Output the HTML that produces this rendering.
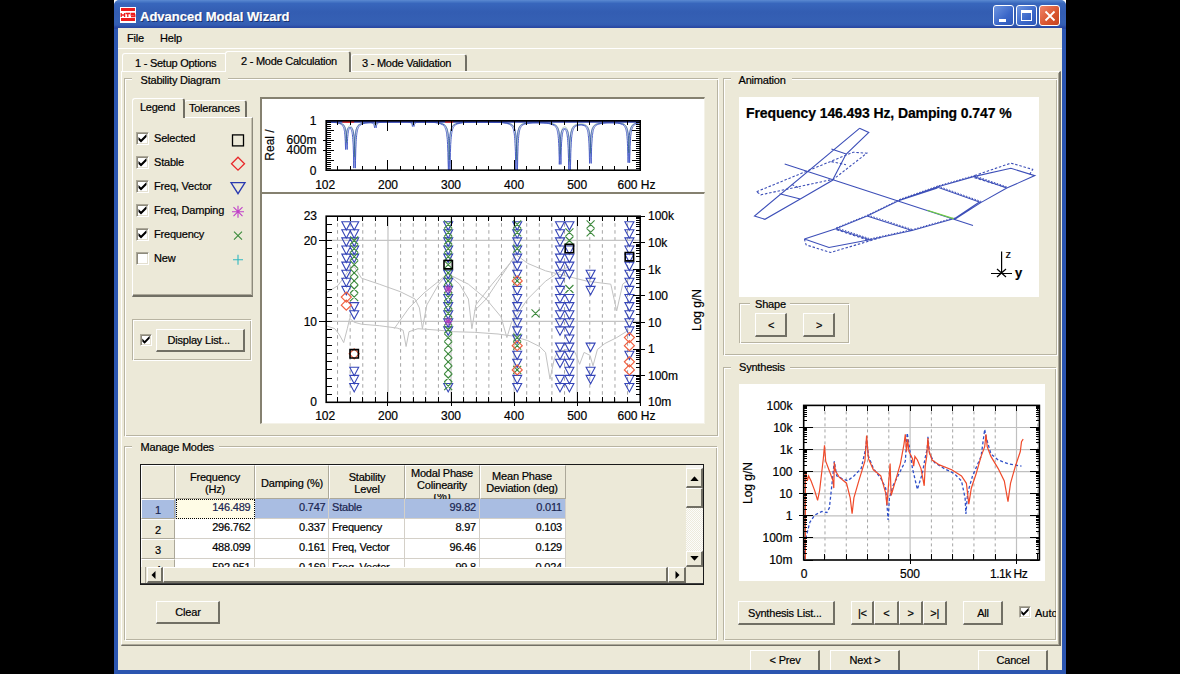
<!DOCTYPE html><html><head><meta charset="utf-8"><style>
html,body{margin:0;padding:0;}
body{width:1180px;height:674px;overflow:hidden;position:relative;background:#000;font-family:"Liberation Sans", sans-serif;}
.a{position:absolute;}
.t{position:absolute;white-space:pre;font-family:"Liberation Sans", sans-serif;-webkit-text-stroke:0.2px currentColor;}
svg.a{overflow:visible;}
</style></head><body>

<div class="a" style="left:114px;top:0px;width:5px;height:5px;background:#fff;"></div>
<div class="a" style="left:1061px;top:0px;width:5px;height:5px;background:#fff;"></div>
<div class="a" style="left:114px;top:0;width:952px;height:680px;background:#2b55b0;border-radius:7px 7px 0 0;"></div>
<div class="a" style="left:114px;top:0;width:952px;height:29px;border-radius:5px 5px 0 0;background:linear-gradient(#5c8ad2 0px,#4a7ac8 1.5px,#3866bc 3.5px,#335db2 12px,#3560b4 22px,#335cb2 25px,#2a4aa4 27px,#2846a0 29px);"></div>
<div class="a" style="left:118px;top:28px;width:944px;height:642px;background:#ECE9D8;"></div>
<svg class="a" style="left:0;top:0" width="1180" height="674"><rect x="120" y="7" width="16" height="16" fill="#fff"/><rect x="121" y="8" width="14" height="3" fill="#ee1c1c"/><rect x="121" y="18" width="14" height="3" fill="#ee1c1c"/><path d="M121.2 13 V17 M124.6 13 V17 M121.2 15 H124.6 M125.6 13.5 H130 M127.8 13.5 V17 M135 13.5 H131.2 V15 H134.8 V16.6 H131" stroke="#ee1c1c" stroke-width="1.3" fill="none"/></svg>
<div class="t" style="top:10.00px;font-size:13px;line-height:13px;font-weight:bold;color:#fff;left:140.00px;text-shadow:1px 1px 0 #1a2f6a;">Advanced Modal Wizard</div>
<div class="a" style="left:993px;top:5px;width:21px;height:21px;box-sizing:border-box;border:1px solid #fff;border-radius:3px;background:linear-gradient(135deg,#6f96e0,#3a66c8 60%,#2f58b8);"><div class="a" style="left:5px;top:13px;width:7px;height:3px;background:#fff"></div></div>
<div class="a" style="left:1016px;top:5px;width:21px;height:21px;box-sizing:border-box;border:1px solid #fff;border-radius:3px;background:linear-gradient(135deg,#6f96e0,#3a66c8 60%,#2f58b8);"><div class="a" style="left:4px;top:4px;width:11px;height:11px;box-sizing:border-box;border:1px solid #fff;border-top-width:3px;"></div></div>
<div class="a" style="left:1039px;top:5px;width:21px;height:21px;box-sizing:border-box;border:1px solid #fff;border-radius:3px;background:linear-gradient(135deg,#f0846a,#d8542e 60%,#c54420);"><svg class="a" style="left:4px;top:4px" width="12" height="12"><path d="M1.5 1.5 L10.5 10.5 M10.5 1.5 L1.5 10.5" stroke="#fff" stroke-width="1.8"/></svg></div>
<div class="t" style="top:32.69px;font-size:11px;line-height:11px;font-weight:normal;color:#000;letter-spacing:-0.2px;left:127.00px;">File</div>
<div class="t" style="top:32.69px;font-size:11px;line-height:11px;font-weight:normal;color:#000;letter-spacing:-0.2px;left:160.00px;">Help</div>
<div class="a" style="left:118px;top:48px;width:944px;height:1px;background:#fff;"></div>
<div class="a" style="left:121px;top:71px;width:940px;height:575px;border-style:solid;border-width:1px 2px 2px 1px;border-color:#fff #716F64 #716F64 #fff;box-sizing:border-box;"></div>
<div class="a" style="left:1058px;top:73px;width:1px;height:572px;background:#ACA899;"></div>
<div class="a" style="left:122px;top:644px;width:937px;height:1px;background:#ACA899;"></div>
<div class="a" style="left:122px;top:53px;width:105px;height:18px;box-sizing:border-box;border-style:solid;border-width:1px 1px 0 1px;border-color:#fff #fff #716F64 #fff;border-radius:3px 3px 0 0;background:#ECE9D8;"></div>
<div class="t" style="top:57.69px;font-size:11px;line-height:11px;font-weight:normal;color:#000;letter-spacing:-0.25px;left:135.00px;">1 - Setup Options</div>
<div class="a" style="left:351px;top:54px;width:116px;height:17px;box-sizing:border-box;border-style:solid;border-width:1px 2px 0 1px;border-color:#fff #716F64 #716F64 #fff;border-radius:3px 3px 0 0;background:#ECE9D8;"></div>
<div class="t" style="top:57.69px;font-size:11px;line-height:11px;font-weight:normal;color:#000;letter-spacing:-0.25px;left:362.00px;">3 - Mode Validation</div>
<div class="a" style="left:225px;top:51px;width:126px;height:21px;box-sizing:border-box;border-style:solid;border-width:1px 2px 0 1px;border-color:#fff #716F64 #716F64 #fff;border-radius:3px 3px 0 0;background:#ECE9D8;"></div>
<div class="t" style="top:55.99px;font-size:11px;line-height:11px;font-weight:normal;color:#000;letter-spacing:-0.25px;left:241.00px;">2 - Mode Calculation</div>
<div class="a" style="left:124px;top:78px;width:594px;height:358px;border:1px solid #B8B4A2;box-sizing:border-box;"></div>
<div class="a" style="left:125px;top:79px;width:594px;height:358px;border:1px solid #fff;box-sizing:border-box;"></div>
<div class="a" style="left:125px;top:79px;width:592px;height:356px;border:0;"></div>
<div class="a" style="left:132px;top:77px;width:96px;height:4px;background:#ECE9D8;"></div>
<div class="t" style="top:74.69px;font-size:11px;line-height:11px;font-weight:normal;color:#000;letter-spacing:-0.2px;left:140.50px;">Stability Diagram</div>
<div class="a" style="left:132px;top:117px;width:121px;height:180px;border-style:solid;border-width:1px 1px 2px 1px;border-color:#fff #8d8a7c #716F64 #fff;box-sizing:border-box;"></div>
<div class="a" style="left:251px;top:118px;width:1px;height:177px;background:#C4C0B0;"></div>
<div class="a" style="left:133px;top:294px;width:118px;height:1px;background:#ACA899;"></div>
<div class="a" style="left:184px;top:100px;width:63px;height:17px;box-sizing:border-box;border-style:solid;border-width:1px 2px 0 1px;border-color:#fff #716F64 #716F64 #fff;border-radius:3px 3px 0 0;background:#ECE9D8;"></div>
<div class="t" style="top:102.69px;font-size:11px;line-height:11px;font-weight:normal;color:#000;letter-spacing:-0.25px;left:189.00px;">Tolerances</div>
<div class="a" style="left:132px;top:98px;width:53px;height:20px;box-sizing:border-box;border-style:solid;border-width:1px 2px 0 1px;border-color:#fff #716F64 #716F64 #fff;border-radius:3px 3px 0 0;background:#ECE9D8;"></div>
<div class="t" style="top:101.69px;font-size:11px;line-height:11px;font-weight:normal;color:#000;letter-spacing:-0.25px;left:140.00px;">Legend</div>
<div class="a" style="left:136px;top:132px;width:13px;height:13px;background:#fff;border-style:solid;border-width:1px;border-color:#ACA899 #fff #fff #ACA899;box-sizing:border-box;box-shadow:inset 1px 1px 0 #8d8a7c, inset -1px -1px 0 #E4E0D0;"></div>
<svg class="a" style="left:136px;top:132px" width="13" height="13" viewBox="0 0 13 13"><path d="M2.5 5 L5 7.5 L10.5 2 L10.5 5 L5 10.5 L2.5 8 Z" fill="#000"/></svg>
<div class="t" style="top:133.49px;font-size:11px;line-height:11px;font-weight:normal;color:#000;letter-spacing:-0.2px;left:154.00px;">Selected</div>
<div class="a" style="left:136px;top:156px;width:13px;height:13px;background:#fff;border-style:solid;border-width:1px;border-color:#ACA899 #fff #fff #ACA899;box-sizing:border-box;box-shadow:inset 1px 1px 0 #8d8a7c, inset -1px -1px 0 #E4E0D0;"></div>
<svg class="a" style="left:136px;top:156px" width="13" height="13" viewBox="0 0 13 13"><path d="M2.5 5 L5 7.5 L10.5 2 L10.5 5 L5 10.5 L2.5 8 Z" fill="#000"/></svg>
<div class="t" style="top:157.49px;font-size:11px;line-height:11px;font-weight:normal;color:#000;letter-spacing:-0.2px;left:154.00px;">Stable</div>
<div class="a" style="left:136px;top:180px;width:13px;height:13px;background:#fff;border-style:solid;border-width:1px;border-color:#ACA899 #fff #fff #ACA899;box-sizing:border-box;box-shadow:inset 1px 1px 0 #8d8a7c, inset -1px -1px 0 #E4E0D0;"></div>
<svg class="a" style="left:136px;top:180px" width="13" height="13" viewBox="0 0 13 13"><path d="M2.5 5 L5 7.5 L10.5 2 L10.5 5 L5 10.5 L2.5 8 Z" fill="#000"/></svg>
<div class="t" style="top:181.49px;font-size:11px;line-height:11px;font-weight:normal;color:#000;letter-spacing:-0.2px;left:154.00px;">Freq, Vector</div>
<div class="a" style="left:136px;top:204px;width:13px;height:13px;background:#fff;border-style:solid;border-width:1px;border-color:#ACA899 #fff #fff #ACA899;box-sizing:border-box;box-shadow:inset 1px 1px 0 #8d8a7c, inset -1px -1px 0 #E4E0D0;"></div>
<svg class="a" style="left:136px;top:204px" width="13" height="13" viewBox="0 0 13 13"><path d="M2.5 5 L5 7.5 L10.5 2 L10.5 5 L5 10.5 L2.5 8 Z" fill="#000"/></svg>
<div class="t" style="top:205.49px;font-size:11px;line-height:11px;font-weight:normal;color:#000;letter-spacing:-0.2px;left:154.00px;">Freq, Damping</div>
<div class="a" style="left:136px;top:228px;width:13px;height:13px;background:#fff;border-style:solid;border-width:1px;border-color:#ACA899 #fff #fff #ACA899;box-sizing:border-box;box-shadow:inset 1px 1px 0 #8d8a7c, inset -1px -1px 0 #E4E0D0;"></div>
<svg class="a" style="left:136px;top:228px" width="13" height="13" viewBox="0 0 13 13"><path d="M2.5 5 L5 7.5 L10.5 2 L10.5 5 L5 10.5 L2.5 8 Z" fill="#000"/></svg>
<div class="t" style="top:229.49px;font-size:11px;line-height:11px;font-weight:normal;color:#000;letter-spacing:-0.2px;left:154.00px;">Frequency</div>
<div class="a" style="left:136px;top:252px;width:13px;height:13px;background:#fff;border-style:solid;border-width:1px;border-color:#ACA899 #fff #fff #ACA899;box-sizing:border-box;box-shadow:inset 1px 1px 0 #8d8a7c, inset -1px -1px 0 #E4E0D0;"></div>
<div class="t" style="top:253.49px;font-size:11px;line-height:11px;font-weight:normal;color:#000;letter-spacing:-0.2px;left:154.00px;">New</div>
<svg class="a" style="left:0;top:0" width="1180" height="674"><rect x="232.5" y="134.9" width="11" height="11" fill="none" stroke="#000" stroke-width="1.3"/><path d="M238 157.20000000000002 L244.5 163.70000000000002 L238 170.20000000000002 L231.5 163.70000000000002 Z" fill="none" stroke="#e8282a" stroke-width="1.3"/><path d="M231 182.70000000000002 L245 182.70000000000002 L238 193.70000000000002 Z" fill="none" stroke="#2a3ab0" stroke-width="1.3"/><path d="M232 211.70000000000002 L244 211.70000000000002 M238 205.70000000000002 L238 217.70000000000002 M233.5 207.20000000000002 L242.5 216.20000000000002 M242.5 207.20000000000002 L233.5 216.20000000000002" stroke="#c040c8" stroke-width="1.1"/><path d="M234 231.70000000000002 L242 239.70000000000002 M242 231.70000000000002 L234 239.70000000000002" stroke="#3a8a3a" stroke-width="1.1"/><path d="M233 259.7 L243 259.7 M238 254.7 L238 264.7" stroke="#30b8c0" stroke-width="1.1"/></svg>
<div class="a" style="left:132px;top:319px;width:119px;height:41px;border:1px solid #B8B4A2;box-sizing:border-box;"></div>
<div class="a" style="left:133px;top:320px;width:119px;height:41px;border:1px solid #fff;box-sizing:border-box;"></div>
<div class="a" style="left:140px;top:334px;width:12px;height:12px;background:#fff;border-style:solid;border-width:1px;border-color:#ACA899 #fff #fff #ACA899;box-sizing:border-box;box-shadow:inset 1px 1px 0 #8d8a7c, inset -1px -1px 0 #E4E0D0;"></div>
<svg class="a" style="left:140px;top:334px" width="12" height="12" viewBox="0 0 13 13"><path d="M2.5 5 L5 7.5 L10.5 2 L10.5 5 L5 10.5 L2.5 8 Z" fill="#000"/></svg>
<div class="a" style="left:156px;top:329px;width:89px;height:23px;background:#ECE9D8;border-style:solid;border-width:1px 2px 2px 1px;border-color:#fff #716F64 #716F64 #fff;box-sizing:border-box;"></div>
<div class="t" style="top:334.69px;font-size:11px;line-height:11px;font-weight:normal;color:#000;letter-spacing:-0.2px;left:167.50px;">Display List...</div>
<div class="a" style="left:260px;top:97px;width:445px;height:96px;background:#fff;border-style:solid;border-width:2px 1px 1px 2px;border-color:#858170 #F4F2E8 #F4F2E8 #858170;box-sizing:border-box;"></div>
<div class="a" style="left:260px;top:192px;width:445px;height:232px;background:#fff;border-style:solid;border-width:2px 1px 1px 2px;border-color:#858170 #F4F2E8 #F4F2E8 #858170;box-sizing:border-box;"></div>
<svg class="a" style="left:0;top:0" width="1180" height="674"><path d="M326.2,121.8 L328.7,122.0 L331.2,122.1 L333.8,122.4 L336.3,122.7 L338.8,123.3 L339.0,123.3 L339.1,123.4 L339.3,123.4 L339.4,123.5 L339.6,123.6 L339.8,123.6 L339.9,123.7 L340.1,123.8 L340.2,123.8 L340.4,123.9 L340.5,124.0 L340.7,124.1 L340.9,124.2 L341.0,124.3 L341.2,124.4 L341.3,124.5 L341.5,124.6 L341.6,124.7 L341.8,124.8 L342.0,125.0 L342.1,125.2 L342.3,125.3 L342.4,125.5 L342.6,125.7 L342.8,125.9 L342.9,126.2 L343.1,126.5 L343.2,126.8 L343.4,127.1 L343.5,127.5 L343.7,127.9 L343.9,128.4 L344.0,129.0 L344.2,129.7 L344.3,130.5 L344.5,131.5 L344.6,132.7 L344.8,134.1 L345.0,136.0 L345.1,138.3 L345.3,141.3 L345.4,145.1 L345.6,149.5 L345.7,147.0 L345.9,142.9 L346.1,139.6 L346.2,137.1 L346.4,135.2 L346.5,133.7 L346.7,132.5 L346.8,131.6 L347.0,130.8 L347.2,130.2 L347.3,129.6 L347.5,129.2 L347.6,128.8 L347.8,128.5 L348.0,128.3 L348.1,128.1 L348.3,127.9 L348.4,127.8 L348.6,127.7 L348.7,127.6 L348.9,127.6 L349.1,127.5 L349.2,127.5 L349.4,127.5 L349.5,127.6 L349.7,127.6 L349.8,127.7 L350.0,127.8 L350.2,128.0 L350.3,128.1 L350.5,128.3 L350.6,128.5 L350.8,128.8 L350.9,129.1 L351.1,129.4 L351.3,129.8 L351.4,130.2 L351.6,130.7 L351.7,131.3 L351.9,131.9 L352.1,132.7 L352.2,133.6 L352.4,134.7 L352.5,136.1 L352.7,137.6 L352.8,139.6 L353.0,142.0 L353.2,145.1 L353.3,149.0 L353.5,154.1 L353.6,160.7 L353.8,168.1 L353.9,163.6 L354.1,156.5 L354.3,150.8 L354.4,146.4 L354.6,142.9 L354.7,140.2 L354.9,138.0 L355.0,136.3 L355.2,134.8 L355.4,133.6 L355.5,132.5 L355.7,131.7 L355.8,130.9 L356.0,130.2 L356.1,129.6 L356.3,129.1 L356.5,128.6 L356.6,128.2 L356.8,127.8 L356.9,127.5 L357.1,127.2 L357.3,126.9 L357.4,126.7 L357.6,126.4 L357.7,126.2 L357.9,126.0 L358.0,125.8 L358.2,125.7 L358.4,125.5 L358.5,125.3 L358.7,125.2 L358.8,125.1 L359.0,125.0 L359.1,124.8 L359.3,124.7 L359.5,124.6 L359.6,124.5 L359.8,124.4 L359.9,124.4 L360.1,124.3 L360.2,124.2 L360.4,124.1 L360.6,124.1 L360.7,124.0 L360.9,123.9 L361.0,123.9 L361.2,123.8 L361.4,123.7 L361.5,123.7 L364.0,123.1 L366.6,122.8 L369.1,122.7 L369.2,122.7 L369.4,122.7 L369.5,122.7 L369.7,122.7 L369.9,122.7 L370.0,122.7 L370.2,122.7 L370.3,122.7 L370.5,122.7 L370.7,122.7 L370.8,122.7 L371.0,122.8 L371.1,122.8 L371.3,122.8 L371.4,122.8 L371.6,122.9 L371.8,122.9 L371.9,122.9 L372.1,123.0 L372.2,123.0 L372.4,123.1 L372.5,123.2 L372.7,123.2 L372.9,123.3 L373.0,123.5 L373.2,123.6 L373.3,123.8 L373.5,124.0 L373.6,124.2 L373.8,124.5 L374.0,124.9 L374.1,125.4 L374.3,126.0 L374.4,126.8 L374.6,127.8 L374.8,127.2 L374.9,126.3 L375.1,125.6 L375.2,125.0 L375.4,124.6 L375.5,124.2 L375.7,124.0 L375.9,123.7 L376.0,123.5 L376.2,123.4 L376.3,123.3 L376.5,123.1 L376.6,123.0 L376.8,122.9 L377.0,122.9 L377.1,122.8 L377.3,122.7 L377.4,122.7 L377.6,122.6 L377.7,122.6 L377.9,122.5 L378.1,122.5 L378.2,122.5 L378.4,122.4 L378.5,122.4 L378.7,122.4 L378.8,122.4 L379.0,122.3 L379.2,122.3 L379.3,122.3 L379.5,122.3 L379.6,122.2 L379.8,122.2 L380.0,122.2 L380.1,122.2 L380.3,122.2 L380.4,122.2 L380.6,122.2 L380.7,122.1 L380.9,122.1 L381.1,122.1 L381.2,122.1 L381.4,122.1 L381.5,122.1 L381.7,122.1 L381.8,122.1 L382.0,122.0 L382.2,122.0 L382.3,122.0 L384.8,121.9 L387.4,121.9 L389.9,121.8 L392.4,121.8 L394.9,121.8 L397.4,121.8 L400.0,121.8 L402.5,121.8 L405.0,121.9 L405.2,121.9 L405.3,121.9 L405.5,121.9 L405.6,121.9 L405.8,121.9 L406.0,121.9 L406.1,121.9 L406.3,121.9 L406.4,121.9 L406.6,122.0 L406.7,122.0 L406.9,122.0 L407.1,122.0 L407.2,122.0 L407.4,122.0 L407.5,122.0 L407.7,122.0 L407.9,122.1 L408.0,122.1 L408.2,122.1 L408.3,122.1 L408.5,122.1 L408.6,122.2 L408.8,122.2 L409.0,122.2 L409.1,122.2 L409.3,122.3 L409.4,122.3 L409.6,122.3 L409.7,122.4 L409.9,122.4 L410.1,122.5 L410.2,122.5 L410.4,122.6 L410.5,122.7 L410.7,122.8 L410.8,122.9 L411.0,123.0 L411.2,123.1 L411.3,123.3 L411.5,123.5 L411.6,123.8 L411.8,124.1 L412.0,124.5 L412.1,125.1 L412.3,125.7 L412.4,126.5 L412.6,126.1 L412.7,125.3 L412.9,124.7 L413.1,124.3 L413.2,123.9 L413.4,123.6 L413.5,123.4 L413.7,123.2 L413.8,123.1 L414.0,122.9 L414.2,122.8 L414.3,122.7 L414.5,122.7 L414.6,122.6 L414.8,122.5 L414.9,122.5 L415.1,122.4 L415.3,122.4 L415.4,122.4 L415.6,122.3 L415.7,122.3 L415.9,122.3 L416.0,122.3 L416.2,122.2 L416.4,122.2 L416.5,122.2 L416.7,122.2 L416.8,122.2 L417.0,122.1 L417.2,122.1 L417.3,122.1 L417.5,122.1 L417.6,122.1 L417.8,122.1 L417.9,122.1 L418.1,122.1 L418.3,122.1 L418.4,122.1 L418.6,122.1 L418.7,122.1 L418.9,122.0 L419.0,122.0 L419.2,122.0 L419.4,122.0 L419.5,122.0 L419.7,122.0 L419.8,122.0 L420.0,122.0 L420.1,122.0 L422.7,122.0 L425.2,122.1 L427.7,122.1 L430.2,122.2 L432.8,122.4 L435.3,122.6 L437.8,123.0 L440.3,123.7 L442.8,124.9 L443.0,125.1 L443.2,125.2 L443.3,125.3 L443.5,125.5 L443.6,125.6 L443.8,125.8 L443.9,126.0 L444.1,126.2 L444.3,126.4 L444.4,126.6 L444.6,126.9 L444.7,127.1 L444.9,127.4 L445.1,127.7 L445.2,128.1 L445.4,128.5 L445.5,128.9 L445.7,129.3 L445.8,129.9 L446.0,130.4 L446.2,131.1 L446.3,131.8 L446.5,132.7 L446.6,133.7 L446.8,134.8 L446.9,136.1 L447.1,137.7 L447.3,139.6 L447.4,141.8 L447.6,144.6 L447.7,148.1 L447.9,152.4 L448.0,157.9 L448.2,164.7 L448.4,170.2 L448.5,167.7 L448.7,160.4 L448.8,154.4 L449.0,149.7 L449.2,145.9 L449.3,142.9 L449.5,140.4 L449.6,138.4 L449.8,136.7 L449.9,135.3 L450.1,134.1 L450.3,133.1 L450.4,132.2 L450.6,131.4 L450.7,130.7 L450.9,130.1 L451.0,129.6 L451.2,129.1 L451.4,128.6 L451.5,128.2 L451.7,127.9 L451.8,127.6 L452.0,127.3 L452.1,127.0 L452.3,126.7 L452.5,126.5 L452.6,126.3 L452.8,126.1 L452.9,125.9 L453.1,125.7 L453.3,125.6 L453.4,125.4 L453.6,125.3 L453.7,125.1 L453.9,125.0 L454.0,124.9 L454.2,124.8 L454.4,124.7 L454.5,124.6 L454.7,124.5 L454.8,124.4 L455.0,124.3 L455.1,124.2 L455.3,124.2 L455.5,124.1 L455.6,124.0 L455.8,124.0 L455.9,123.9 L456.1,123.8 L458.6,123.1 L461.1,122.7 L463.7,122.5 L466.2,122.3 L468.7,122.2 L471.2,122.1 L473.7,122.1 L476.3,122.0 L478.8,122.0 L481.3,122.0 L483.8,122.0 L486.4,122.0 L488.9,122.1 L491.4,122.1 L493.9,122.2 L496.4,122.3 L499.0,122.4 L501.5,122.6 L504.0,122.9 L506.5,123.3 L509.1,124.1 L509.2,124.2 L509.4,124.3 L509.5,124.4 L509.7,124.4 L509.8,124.5 L510.0,124.6 L510.2,124.7 L510.3,124.8 L510.5,124.9 L510.6,125.1 L510.8,125.2 L510.9,125.3 L511.1,125.5 L511.3,125.6 L511.4,125.8 L511.6,126.0 L511.7,126.1 L511.9,126.4 L512.0,126.6 L512.2,126.8 L512.4,127.1 L512.5,127.4 L512.7,127.7 L512.8,128.0 L513.0,128.4 L513.1,128.9 L513.3,129.3 L513.5,129.9 L513.6,130.5 L513.8,131.2 L513.9,132.0 L514.1,132.9 L514.3,133.9 L514.4,135.2 L514.6,136.7 L514.7,138.5 L514.9,140.7 L515.0,143.4 L515.2,146.8 L515.4,151.2 L515.5,156.9 L515.7,164.1 L515.8,170.2 L516.0,167.4 L516.1,159.6 L516.3,153.3 L516.5,148.4 L516.6,144.7 L516.8,141.7 L516.9,139.3 L517.1,137.4 L517.2,135.8 L517.4,134.4 L517.6,133.3 L517.7,132.3 L517.9,131.5 L518.0,130.8 L518.2,130.1 L518.4,129.6 L518.5,129.1 L518.7,128.6 L518.8,128.2 L519.0,127.9 L519.1,127.6 L519.3,127.3 L519.5,127.0 L519.6,126.7 L519.8,126.5 L519.9,126.3 L520.1,126.1 L520.2,125.9 L520.4,125.8 L520.6,125.6 L520.7,125.5 L520.9,125.3 L521.0,125.2 L521.2,125.1 L521.3,125.0 L521.5,124.9 L521.7,124.8 L521.8,124.7 L522.0,124.6 L522.1,124.5 L522.3,124.4 L522.5,124.4 L522.6,124.3 L522.8,124.2 L522.9,124.2 L523.1,124.1 L523.2,124.0 L523.4,124.0 L523.6,123.9 L526.1,123.4 L528.6,123.0 L531.1,122.9 L533.6,122.8 L536.2,122.8 L538.7,122.8 L541.2,122.9 L543.7,123.0 L546.3,123.2 L548.8,123.6 L551.3,124.2 L553.8,125.3 L554.0,125.4 L554.1,125.5 L554.3,125.6 L554.4,125.7 L554.6,125.8 L554.8,126.0 L554.9,126.1 L555.1,126.3 L555.2,126.4 L555.4,126.6 L555.6,126.8 L555.7,127.0 L555.9,127.3 L556.0,127.5 L556.2,127.8 L556.3,128.1 L556.5,128.4 L556.7,128.8 L556.8,129.2 L557.0,129.7 L557.1,130.2 L557.3,130.7 L557.4,131.4 L557.6,132.2 L557.8,133.1 L557.9,134.1 L558.1,135.3 L558.2,136.8 L558.4,138.6 L558.5,140.8 L558.7,143.6 L558.9,147.2 L559.0,151.8 L559.2,157.7 L559.3,164.4 L559.5,160.5 L559.7,154.2 L559.8,149.1 L560.0,145.2 L560.1,142.2 L560.3,139.9 L560.4,138.0 L560.6,136.4 L560.8,135.2 L560.9,134.2 L561.1,133.3 L561.2,132.6 L561.4,132.0 L561.5,131.4 L561.7,131.0 L561.9,130.6 L562.0,130.3 L562.2,130.0 L562.3,129.7 L562.5,129.5 L562.6,129.3 L562.8,129.2 L563.0,129.1 L563.1,128.9 L563.3,128.9 L563.4,128.8 L563.6,128.8 L563.7,128.8 L563.9,128.8 L564.1,128.8 L564.2,128.8 L564.4,128.9 L564.5,128.9 L564.7,129.0 L564.9,129.2 L565.0,129.3 L565.2,129.5 L565.3,129.6 L565.5,129.9 L565.6,130.1 L565.8,130.4 L566.0,130.7 L566.1,131.1 L566.3,131.5 L566.4,132.0 L566.6,132.6 L566.7,133.2 L566.9,134.0 L567.1,134.8 L567.2,135.9 L567.4,137.1 L567.5,138.5 L567.7,140.3 L567.8,142.4 L568.0,145.1 L568.2,148.5 L568.3,152.9 L568.5,158.5 L568.6,165.7 L568.8,170.2 L569.0,169.0 L569.1,161.1 L569.3,154.8 L569.4,150.0 L569.6,146.2 L569.7,143.2 L569.9,140.8 L570.1,138.8 L570.2,137.2 L570.4,135.9 L570.5,134.7 L570.7,133.7 L570.8,132.9 L571.0,132.1 L571.2,131.5 L571.3,130.9 L571.5,130.4 L571.6,130.0 L571.8,129.5 L571.9,129.2 L572.1,128.8 L572.3,128.5 L572.4,128.3 L572.6,128.0 L572.7,127.8 L572.9,127.6 L573.0,127.4 L573.2,127.2 L573.4,127.0 L573.5,126.8 L573.7,126.7 L573.8,126.6 L574.0,126.4 L574.2,126.3 L574.3,126.2 L574.5,126.1 L574.6,126.0 L574.8,125.9 L574.9,125.8 L575.1,125.7 L575.3,125.7 L575.4,125.6 L575.6,125.5 L575.7,125.4 L575.9,125.4 L576.0,125.3 L576.2,125.3 L576.4,125.2 L576.5,125.2 L579.0,124.8 L581.6,124.8 L584.1,125.6 L584.2,125.7 L584.4,125.8 L584.6,125.9 L584.7,126.0 L584.9,126.1 L585.0,126.2 L585.2,126.3 L585.3,126.5 L585.5,126.6 L585.7,126.8 L585.8,127.0 L586.0,127.2 L586.1,127.4 L586.3,127.7 L586.4,127.9 L586.6,128.2 L586.8,128.6 L586.9,128.9 L587.1,129.3 L587.2,129.8 L587.4,130.3 L587.6,130.9 L587.7,131.6 L587.9,132.4 L588.0,133.3 L588.2,134.3 L588.3,135.6 L588.5,137.1 L588.7,138.9 L588.8,141.2 L589.0,143.9 L589.1,147.5 L589.3,151.9 L589.4,157.4 L589.6,163.4 L589.8,159.8 L589.9,153.9 L590.1,149.1 L590.2,145.2 L590.4,142.1 L590.5,139.7 L590.7,137.7 L590.9,136.0 L591.0,134.7 L591.2,133.5 L591.3,132.5 L591.5,131.7 L591.6,131.0 L591.8,130.3 L592.0,129.8 L592.1,129.3 L592.3,128.8 L592.4,128.4 L592.6,128.1 L592.8,127.7 L592.9,127.5 L593.1,127.2 L593.2,126.9 L593.4,126.7 L593.5,126.5 L593.7,126.3 L593.9,126.1 L594.0,126.0 L594.2,125.8 L594.3,125.7 L594.5,125.5 L594.6,125.4 L594.8,125.3 L595.0,125.2 L595.1,125.1 L595.3,125.0 L595.4,124.9 L595.6,124.8 L595.7,124.7 L595.9,124.6 L596.1,124.5 L596.2,124.5 L596.4,124.4 L596.5,124.3 L596.7,124.3 L596.9,124.2 L597.0,124.2 L597.2,124.1 L597.3,124.1 L599.8,123.5 L602.4,123.1 L604.9,122.9 L607.4,122.8 L609.9,122.8 L612.5,122.8 L615.0,122.9 L617.5,123.1 L620.0,123.6 L622.5,124.6 L622.7,124.6 L622.9,124.7 L623.0,124.9 L623.2,125.0 L623.3,125.1 L623.5,125.2 L623.6,125.4 L623.8,125.5 L624.0,125.7 L624.1,125.9 L624.3,126.1 L624.4,126.3 L624.6,126.5 L624.8,126.8 L624.9,127.0 L625.1,127.3 L625.2,127.7 L625.4,128.1 L625.5,128.5 L625.7,128.9 L625.9,129.5 L626.0,130.1 L626.2,130.7 L626.3,131.5 L626.5,132.4 L626.6,133.5 L626.8,134.8 L627.0,136.3 L627.1,138.1 L627.3,140.4 L627.4,143.2 L627.6,146.7 L627.7,151.1 L627.9,156.6 L628.1,162.7 L628.2,159.1 L628.4,153.2 L628.5,148.3 L628.7,144.4 L628.9,141.4 L629.0,138.9 L629.2,136.9 L629.3,135.3 L629.5,134.0 L629.6,132.8 L629.8,131.8 L630.0,131.0 L630.1,130.3 L630.3,129.6 L630.4,129.1 L630.6,128.6 L630.7,128.1 L630.9,127.7 L631.1,127.4 L631.2,127.1 L631.4,126.8 L631.5,126.5 L631.7,126.3 L631.8,126.0 L632.0,125.8 L632.2,125.6 L632.3,125.5 L632.5,125.3 L632.6,125.1 L632.8,125.0 L632.9,124.9 L633.1,124.7 L633.3,124.6 L633.4,124.5 L633.6,124.4 L633.7,124.3 L633.9,124.2 L634.1,124.1 L634.2,124.0 L634.4,124.0 L634.5,123.9 L634.7,123.8 L634.8,123.8 L635.0,123.7 L635.2,123.6 L635.3,123.6 L635.5,123.5 L635.6,123.5 L635.8,123.4 L638.3,122.8" fill="none" stroke="#4a5ec8" stroke-width="1"/><path d="M326.2,121.8 L328.7,121.9 L331.2,122.0 L333.8,122.2 L336.3,122.5 L338.8,122.9 L341.3,123.7 L341.5,123.7 L341.6,123.8 L341.8,123.9 L342.0,123.9 L342.1,124.0 L342.3,124.1 L342.4,124.2 L342.6,124.3 L342.8,124.4 L342.9,124.5 L343.1,124.6 L343.2,124.8 L343.4,124.9 L343.5,125.1 L343.7,125.2 L343.9,125.4 L344.0,125.6 L344.2,125.8 L344.3,126.0 L344.5,126.3 L344.6,126.6 L344.8,126.9 L345.0,127.3 L345.1,127.7 L345.3,128.1 L345.4,128.7 L345.6,129.3 L345.7,130.0 L345.9,130.9 L346.1,131.9 L346.2,133.2 L346.4,134.8 L346.5,136.8 L346.7,139.4 L346.8,142.7 L347.0,146.9 L347.2,149.5 L347.3,145.2 L347.5,141.5 L347.6,138.6 L347.8,136.3 L348.0,134.6 L348.1,133.2 L348.3,132.1 L348.4,131.2 L348.6,130.5 L348.7,129.9 L348.9,129.5 L349.1,129.0 L349.2,128.7 L349.4,128.4 L349.5,128.2 L349.7,128.0 L349.8,127.9 L350.0,127.7 L350.2,127.6 L350.3,127.6 L350.5,127.5 L350.6,127.5 L350.8,127.5 L350.9,127.6 L351.1,127.6 L351.3,127.7 L351.4,127.8 L351.6,127.9 L351.7,128.0 L351.9,128.2 L352.1,128.4 L352.2,128.6 L352.4,128.9 L352.5,129.2 L352.7,129.5 L352.8,129.9 L353.0,130.4 L353.2,130.9 L353.3,131.5 L353.5,132.2 L353.6,133.1 L353.8,134.1 L353.9,135.2 L354.1,136.6 L354.3,138.4 L354.4,140.5 L354.6,143.2 L354.7,146.5 L354.9,150.9 L355.0,156.6 L355.2,163.6 L355.4,168.1 L355.5,160.6 L355.7,154.0 L355.8,148.9 L356.0,144.9 L356.1,141.8 L356.3,139.3 L356.5,137.3 L356.6,135.7 L356.8,134.3 L356.9,133.2 L357.1,132.2 L357.3,131.3 L357.4,130.6 L357.6,130.0 L357.7,129.4 L357.9,128.9 L358.0,128.5 L358.2,128.1 L358.4,127.7 L358.5,127.4 L358.7,127.1 L358.8,126.8 L359.0,126.6 L359.1,126.3 L359.3,126.1 L359.5,125.9 L359.6,125.8 L359.8,125.6 L359.9,125.4 L360.1,125.3 L360.2,125.2 L360.4,125.0 L360.6,124.9 L360.7,124.8 L360.9,124.7 L361.0,124.6 L361.2,124.5 L361.4,124.4 L361.5,124.3 L361.7,124.2 L361.8,124.2 L362.0,124.1 L362.1,124.0 L362.3,124.0 L362.5,123.9 L362.6,123.8 L362.8,123.8 L362.9,123.7 L365.4,123.1 L368.0,122.8 L370.5,122.7 L370.7,122.7 L370.8,122.7 L371.0,122.7 L371.1,122.7 L371.3,122.7 L371.4,122.7 L371.6,122.7 L371.8,122.7 L371.9,122.7 L372.1,122.7 L372.2,122.7 L372.4,122.7 L372.5,122.8 L372.7,122.8 L372.9,122.8 L373.0,122.8 L373.2,122.9 L373.3,122.9 L373.5,123.0 L373.6,123.0 L373.8,123.1 L374.0,123.1 L374.1,123.2 L374.3,123.3 L374.4,123.4 L374.6,123.5 L374.8,123.7 L374.9,123.8 L375.1,124.0 L375.2,124.3 L375.4,124.6 L375.5,125.1 L375.7,125.6 L375.9,126.3 L376.0,127.2 L376.2,127.8 L376.3,126.8 L376.5,126.0 L376.6,125.3 L376.8,124.8 L377.0,124.4 L377.1,124.1 L377.3,123.9 L377.4,123.7 L377.6,123.5 L377.7,123.3 L377.9,123.2 L378.1,123.1 L378.2,123.0 L378.4,122.9 L378.5,122.8 L378.7,122.8 L378.8,122.7 L379.0,122.7 L379.2,122.6 L379.3,122.6 L379.5,122.5 L379.6,122.5 L379.8,122.5 L380.0,122.4 L380.1,122.4 L380.3,122.4 L380.4,122.3 L380.6,122.3 L380.7,122.3 L380.9,122.3 L381.1,122.3 L381.2,122.2 L381.4,122.2 L381.5,122.2 L381.7,122.2 L381.8,122.2 L382.0,122.2 L382.2,122.1 L382.3,122.1 L382.5,122.1 L382.6,122.1 L382.8,122.1 L382.9,122.1 L383.1,122.1 L383.3,122.1 L383.4,122.1 L383.6,122.0 L383.7,122.0 L386.3,121.9 L388.8,121.9 L391.3,121.8 L393.8,121.8 L396.3,121.8 L398.9,121.8 L401.4,121.8 L403.9,121.8 L406.4,121.9 L406.6,121.9 L406.7,121.9 L406.9,121.9 L407.1,121.9 L407.2,121.9 L407.4,121.9 L407.5,121.9 L407.7,121.9 L407.9,121.9 L408.0,122.0 L408.2,122.0 L408.3,122.0 L408.5,122.0 L408.6,122.0 L408.8,122.0 L409.0,122.0 L409.1,122.0 L409.3,122.0 L409.4,122.1 L409.6,122.1 L409.7,122.1 L409.9,122.1 L410.1,122.1 L410.2,122.2 L410.4,122.2 L410.5,122.2 L410.7,122.2 L410.8,122.3 L411.0,122.3 L411.2,122.3 L411.3,122.4 L411.5,122.4 L411.6,122.5 L411.8,122.6 L412.0,122.6 L412.1,122.7 L412.3,122.8 L412.4,122.9 L412.6,123.0 L412.7,123.2 L412.9,123.4 L413.1,123.6 L413.2,123.9 L413.4,124.3 L413.5,124.7 L413.7,125.3 L413.8,126.1 L414.0,126.5 L414.2,125.8 L414.3,125.1 L414.5,124.5 L414.6,124.1 L414.8,123.8 L414.9,123.5 L415.1,123.3 L415.3,123.2 L415.4,123.0 L415.6,122.9 L415.7,122.8 L415.9,122.7 L416.0,122.6 L416.2,122.6 L416.4,122.5 L416.5,122.5 L416.7,122.4 L416.8,122.4 L417.0,122.3 L417.2,122.3 L417.3,122.3 L417.5,122.3 L417.6,122.2 L417.8,122.2 L417.9,122.2 L418.1,122.2 L418.3,122.2 L418.4,122.2 L418.6,122.1 L418.7,122.1 L418.9,122.1 L419.0,122.1 L419.2,122.1 L419.4,122.1 L419.5,122.1 L419.7,122.1 L419.8,122.1 L420.0,122.1 L420.1,122.1 L420.3,122.1 L420.5,122.0 L420.6,122.0 L420.8,122.0 L420.9,122.0 L421.1,122.0 L421.3,122.0 L421.4,122.0 L421.6,122.0 L424.1,122.0 L426.6,122.1 L429.1,122.1 L431.7,122.2 L434.2,122.4 L436.7,122.6 L439.2,123.0 L441.7,123.6 L444.3,124.9 L444.4,125.0 L444.6,125.1 L444.7,125.3 L444.9,125.4 L445.1,125.5 L445.2,125.7 L445.4,125.9 L445.5,126.1 L445.7,126.3 L445.8,126.5 L446.0,126.7 L446.2,127.0 L446.3,127.2 L446.5,127.5 L446.6,127.9 L446.8,128.2 L446.9,128.6 L447.1,129.1 L447.3,129.5 L447.4,130.1 L447.6,130.7 L447.7,131.4 L447.9,132.2 L448.0,133.1 L448.2,134.1 L448.4,135.3 L448.5,136.7 L448.7,138.4 L448.8,140.4 L449.0,142.9 L449.2,145.9 L449.3,149.7 L449.5,154.4 L449.6,160.4 L449.8,167.7 L449.9,170.2 L450.1,164.7 L450.3,157.9 L450.4,152.4 L450.6,148.1 L450.7,144.6 L450.9,141.8 L451.0,139.6 L451.2,137.7 L451.4,136.1 L451.5,134.8 L451.7,133.7 L451.8,132.7 L452.0,131.9 L452.1,131.1 L452.3,130.5 L452.5,129.9 L452.6,129.4 L452.8,128.9 L452.9,128.5 L453.1,128.1 L453.3,127.7 L453.4,127.4 L453.6,127.1 L453.7,126.9 L453.9,126.6 L454.0,126.4 L454.2,126.2 L454.4,126.0 L454.5,125.8 L454.7,125.7 L454.8,125.5 L455.0,125.4 L455.1,125.2 L455.3,125.1 L455.5,125.0 L455.6,124.9 L455.8,124.7 L455.9,124.6 L456.1,124.5 L456.2,124.5 L456.4,124.4 L456.6,124.3 L456.7,124.2 L456.9,124.1 L457.0,124.1 L457.2,124.0 L457.3,123.9 L457.5,123.9 L460.0,123.2 L462.6,122.8 L465.1,122.5 L467.6,122.3 L470.1,122.2 L472.6,122.1 L475.2,122.1 L477.7,122.0 L480.2,122.0 L482.7,122.0 L485.2,122.0 L487.8,122.0 L490.3,122.1 L492.8,122.1 L495.3,122.2 L497.9,122.3 L500.4,122.4 L502.9,122.6 L505.4,122.9 L507.9,123.3 L510.5,124.1 L510.6,124.2 L510.8,124.2 L510.9,124.3 L511.1,124.4 L511.3,124.5 L511.4,124.6 L511.6,124.7 L511.7,124.8 L511.9,124.9 L512.0,125.0 L512.2,125.1 L512.4,125.2 L512.5,125.4 L512.7,125.5 L512.8,125.7 L513.0,125.8 L513.1,126.0 L513.3,126.2 L513.5,126.4 L513.6,126.7 L513.8,126.9 L513.9,127.2 L514.1,127.5 L514.3,127.8 L514.4,128.2 L514.6,128.6 L514.7,129.0 L514.9,129.5 L515.0,130.1 L515.2,130.7 L515.4,131.5 L515.5,132.3 L515.7,133.3 L515.8,134.4 L516.0,135.7 L516.1,137.3 L516.3,139.3 L516.5,141.7 L516.6,144.6 L516.8,148.4 L516.9,153.3 L517.1,159.6 L517.2,167.4 L517.4,170.2 L517.6,164.1 L517.7,156.9 L517.9,151.2 L518.0,146.8 L518.2,143.4 L518.4,140.7 L518.5,138.5 L518.7,136.7 L518.8,135.2 L519.0,134.0 L519.1,132.9 L519.3,132.0 L519.5,131.2 L519.6,130.5 L519.8,129.9 L519.9,129.4 L520.1,128.9 L520.2,128.5 L520.4,128.1 L520.6,127.8 L520.7,127.4 L520.9,127.2 L521.0,126.9 L521.2,126.7 L521.3,126.4 L521.5,126.2 L521.7,126.0 L521.8,125.9 L522.0,125.7 L522.1,125.6 L522.3,125.4 L522.5,125.3 L522.6,125.2 L522.8,125.0 L522.9,124.9 L523.1,124.8 L523.2,124.7 L523.4,124.7 L523.6,124.6 L523.7,124.5 L523.9,124.4 L524.0,124.3 L524.2,124.3 L524.3,124.2 L524.5,124.1 L524.7,124.1 L524.8,124.0 L525.0,124.0 L527.5,123.4 L530.0,123.1 L532.5,122.9 L535.1,122.8 L537.6,122.8 L540.1,122.8 L542.6,122.9 L545.1,123.0 L547.7,123.2 L550.2,123.6 L552.7,124.1 L555.2,125.2 L555.4,125.3 L555.6,125.4 L555.7,125.5 L555.9,125.6 L556.0,125.8 L556.2,125.9 L556.3,126.0 L556.5,126.2 L556.7,126.3 L556.8,126.5 L557.0,126.7 L557.1,126.9 L557.3,127.1 L557.4,127.4 L557.6,127.6 L557.8,127.9 L557.9,128.2 L558.1,128.6 L558.2,128.9 L558.4,129.4 L558.5,129.9 L558.7,130.4 L558.9,131.0 L559.0,131.7 L559.2,132.5 L559.3,133.5 L559.5,134.6 L559.7,135.9 L559.8,137.5 L560.0,139.4 L560.1,141.9 L560.3,145.0 L560.4,148.9 L560.6,154.0 L560.8,160.4 L560.9,164.4 L561.1,157.8 L561.2,152.0 L561.4,147.4 L561.5,143.9 L561.7,141.2 L561.9,139.1 L562.0,137.3 L562.2,135.9 L562.3,134.8 L562.5,133.8 L562.6,133.0 L562.8,132.3 L563.0,131.7 L563.1,131.2 L563.3,130.8 L563.4,130.5 L563.6,130.1 L563.7,129.9 L563.9,129.6 L564.1,129.4 L564.2,129.3 L564.4,129.1 L564.5,129.0 L564.7,128.9 L564.9,128.8 L565.0,128.8 L565.2,128.8 L565.3,128.8 L565.5,128.8 L565.6,128.8 L565.8,128.8 L566.0,128.9 L566.1,129.0 L566.3,129.1 L566.4,129.2 L566.6,129.4 L566.7,129.5 L566.9,129.7 L567.1,130.0 L567.2,130.2 L567.4,130.5 L567.5,130.9 L567.7,131.3 L567.8,131.7 L568.0,132.2 L568.2,132.8 L568.3,133.5 L568.5,134.3 L568.6,135.2 L568.8,136.3 L569.0,137.6 L569.1,139.2 L569.3,141.1 L569.4,143.4 L569.6,146.4 L569.7,150.1 L569.9,155.0 L570.1,161.2 L570.2,169.0 L570.4,170.2 L570.5,165.7 L570.7,158.4 L570.8,152.7 L571.0,148.3 L571.2,144.9 L571.3,142.2 L571.5,139.9 L571.6,138.1 L571.8,136.6 L571.9,135.4 L572.1,134.3 L572.3,133.4 L572.4,132.6 L572.6,131.9 L572.7,131.3 L572.9,130.7 L573.0,130.2 L573.2,129.8 L573.4,129.4 L573.5,129.0 L573.7,128.7 L573.8,128.4 L574.0,128.2 L574.2,127.9 L574.3,127.7 L574.5,127.5 L574.6,127.3 L574.8,127.1 L574.9,126.9 L575.1,126.8 L575.3,126.6 L575.4,126.5 L575.6,126.4 L575.7,126.3 L575.9,126.2 L576.0,126.1 L576.2,126.0 L576.4,125.9 L576.5,125.8 L576.7,125.7 L576.8,125.6 L577.0,125.6 L577.1,125.5 L577.3,125.4 L577.5,125.4 L577.6,125.3 L577.8,125.3 L577.9,125.2 L580.5,124.8 L583.0,124.8 L585.5,125.5 L585.7,125.6 L585.8,125.7 L586.0,125.8 L586.1,125.9 L586.3,126.0 L586.4,126.1 L586.6,126.3 L586.8,126.4 L586.9,126.5 L587.1,126.7 L587.2,126.9 L587.4,127.1 L587.6,127.3 L587.7,127.5 L587.9,127.8 L588.0,128.0 L588.2,128.4 L588.3,128.7 L588.5,129.1 L588.7,129.5 L588.8,130.0 L589.0,130.5 L589.1,131.2 L589.3,131.9 L589.4,132.7 L589.6,133.7 L589.8,134.8 L589.9,136.2 L590.1,137.8 L590.2,139.8 L590.4,142.2 L590.5,145.2 L590.7,149.1 L590.9,154.0 L591.0,159.8 L591.2,163.4 L591.3,157.4 L591.5,151.9 L591.6,147.4 L591.8,143.9 L592.0,141.1 L592.1,138.8 L592.3,137.0 L592.4,135.5 L592.6,134.2 L592.8,133.1 L592.9,132.2 L593.1,131.4 L593.2,130.7 L593.4,130.1 L593.5,129.6 L593.7,129.1 L593.9,128.7 L594.0,128.3 L594.2,127.9 L594.3,127.6 L594.5,127.3 L594.6,127.1 L594.8,126.8 L595.0,126.6 L595.1,126.4 L595.3,126.2 L595.4,126.1 L595.6,125.9 L595.7,125.7 L595.9,125.6 L596.1,125.5 L596.2,125.4 L596.4,125.2 L596.5,125.1 L596.7,125.0 L596.9,124.9 L597.0,124.8 L597.2,124.8 L597.3,124.7 L597.5,124.6 L597.6,124.5 L597.8,124.4 L598.0,124.4 L598.1,124.3 L598.3,124.3 L598.4,124.2 L598.6,124.1 L598.7,124.1 L601.3,123.5 L603.8,123.1 L606.3,122.9 L608.8,122.8 L611.4,122.8 L613.9,122.8 L616.4,122.9 L618.9,123.1 L621.4,123.5 L624.0,124.5 L624.1,124.6 L624.3,124.7 L624.4,124.8 L624.6,124.9 L624.8,125.0 L624.9,125.2 L625.1,125.3 L625.2,125.4 L625.4,125.6 L625.5,125.8 L625.7,125.9 L625.9,126.2 L626.0,126.4 L626.2,126.6 L626.3,126.9 L626.5,127.2 L626.6,127.5 L626.8,127.8 L627.0,128.2 L627.1,128.7 L627.3,129.1 L627.4,129.7 L627.6,130.3 L627.7,131.1 L627.9,131.9 L628.1,132.9 L628.2,134.0 L628.4,135.4 L628.5,137.0 L628.7,139.0 L628.9,141.4 L629.0,144.5 L629.2,148.3 L629.3,153.2 L629.5,159.1 L629.6,162.7 L629.8,156.6 L630.0,151.1 L630.1,146.7 L630.3,143.1 L630.4,140.3 L630.6,138.1 L630.7,136.3 L630.9,134.7 L631.1,133.5 L631.2,132.4 L631.4,131.5 L631.5,130.7 L631.7,130.0 L631.8,129.4 L632.0,128.9 L632.2,128.4 L632.3,128.0 L632.5,127.6 L632.6,127.2 L632.8,126.9 L632.9,126.7 L633.1,126.4 L633.3,126.2 L633.4,125.9 L633.6,125.7 L633.7,125.6 L633.9,125.4 L634.1,125.2 L634.2,125.1 L634.4,124.9 L634.5,124.8 L634.7,124.7 L634.8,124.6 L635.0,124.5 L635.2,124.4 L635.3,124.3 L635.5,124.2 L635.6,124.1 L635.8,124.0 L635.9,123.9 L636.1,123.9 L636.3,123.8 L636.4,123.7 L636.6,123.7 L636.7,123.6 L636.9,123.6 L637.0,123.5 L637.2,123.4 L639.7,122.8" fill="none" stroke="#4a5ec8" stroke-width="1"/><path d="M326.2,121.6 L328.7,121.6 L331.2,121.8 L333.8,121.9 L336.3,122.1 L338.8,122.5 L341.3,123.2 L341.5,123.3 L341.6,123.3 L341.8,123.4 L342.0,123.5 L342.1,123.6 L342.3,123.7 L342.4,123.8 L342.6,123.9 L342.8,124.0 L342.9,124.1 L343.1,124.2 L343.2,124.4 L343.4,124.5 L343.5,124.7 L343.7,124.9 L343.9,125.1 L344.0,125.3 L344.2,125.6 L344.3,125.9 L344.5,126.2 L344.6,126.6 L344.8,127.1 L345.0,127.6 L345.1,128.2 L345.3,129.0 L345.4,129.9 L345.6,131.0 L345.7,132.5 L345.9,134.3 L346.1,136.7 L346.2,139.7 L346.4,142.8 L346.5,139.8 L346.7,136.8 L346.8,134.5 L347.0,132.7 L347.2,131.4 L347.3,130.3 L347.5,129.4 L347.6,128.8 L347.8,128.2 L348.0,127.7 L348.1,127.4 L348.3,127.0 L348.4,126.8 L348.6,126.6 L348.7,126.4 L348.9,126.2 L349.1,126.1 L349.2,126.0 L349.4,125.9 L349.5,125.9 L349.7,125.9 L349.8,125.8 L350.0,125.8 L350.2,125.9 L350.3,125.9 L350.5,125.9 L350.6,126.0 L350.8,126.1 L350.9,126.2 L351.1,126.3 L351.3,126.5 L351.4,126.6 L351.6,126.8 L351.7,127.0 L351.9,127.3 L352.1,127.6 L352.2,127.9 L352.4,128.3 L352.5,128.7 L352.7,129.3 L352.8,129.9 L353.0,130.6 L353.2,131.4 L353.3,132.5 L353.5,133.7 L353.6,135.2 L353.8,137.1 L353.9,139.5 L354.1,142.7 L354.3,146.7 L354.4,151.8 L354.6,157.1 L354.7,151.8 L354.9,146.6 L355.0,142.6 L355.2,139.4 L355.4,137.0 L355.5,135.0 L355.7,133.4 L355.8,132.2 L356.0,131.1 L356.1,130.2 L356.3,129.5 L356.5,128.8 L356.6,128.3 L356.8,127.8 L356.9,127.3 L357.1,127.0 L357.3,126.6 L357.4,126.3 L357.6,126.0 L357.7,125.8 L357.9,125.6 L358.0,125.4 L358.2,125.2 L358.4,125.0 L358.5,124.8 L358.7,124.7 L358.8,124.5 L359.0,124.4 L359.1,124.3 L359.3,124.2 L359.5,124.1 L359.6,124.0 L359.8,123.9 L359.9,123.8 L360.1,123.7 L360.2,123.7 L360.4,123.6 L360.6,123.5 L360.7,123.5 L360.9,123.4 L361.0,123.3 L361.2,123.3 L361.4,123.2 L361.5,123.2 L361.7,123.1 L361.8,123.1 L362.0,123.0 L362.1,123.0 L364.7,122.5 L367.2,122.3 L369.7,122.2 L369.9,122.2 L370.0,122.2 L370.2,122.2 L370.3,122.2 L370.5,122.2 L370.7,122.2 L370.8,122.2 L371.0,122.2 L371.1,122.2 L371.3,122.2 L371.4,122.2 L371.6,122.3 L371.8,122.3 L371.9,122.3 L372.1,122.3 L372.2,122.3 L372.4,122.4 L372.5,122.4 L372.7,122.4 L372.9,122.4 L373.0,122.5 L373.2,122.5 L373.3,122.6 L373.5,122.6 L373.6,122.7 L373.8,122.8 L374.0,122.9 L374.1,123.0 L374.3,123.2 L374.4,123.4 L374.6,123.6 L374.8,123.9 L374.9,124.3 L375.1,124.8 L375.2,125.5 L375.4,126.1 L375.5,125.5 L375.7,124.8 L375.9,124.3 L376.0,123.9 L376.2,123.6 L376.3,123.3 L376.5,123.1 L376.6,123.0 L376.8,122.8 L377.0,122.7 L377.1,122.6 L377.3,122.5 L377.4,122.5 L377.6,122.4 L377.7,122.3 L377.9,122.3 L378.1,122.2 L378.2,122.2 L378.4,122.2 L378.5,122.1 L378.7,122.1 L378.8,122.1 L379.0,122.0 L379.2,122.0 L379.3,122.0 L379.5,122.0 L379.6,122.0 L379.8,121.9 L380.0,121.9 L380.1,121.9 L380.3,121.9 L380.4,121.9 L380.6,121.9 L380.7,121.9 L380.9,121.8 L381.1,121.8 L381.2,121.8 L381.4,121.8 L381.5,121.8 L381.7,121.8 L381.8,121.8 L382.0,121.8 L382.2,121.8 L382.3,121.8 L382.5,121.7 L382.6,121.7 L382.8,121.7 L382.9,121.7 L385.5,121.6 L388.0,121.6 L390.5,121.6 L393.0,121.5 L395.6,121.5 L398.1,121.5 L400.6,121.5 L403.1,121.6 L405.6,121.6 L408.2,121.7 L408.3,121.7 L408.5,121.7 L408.6,121.7 L408.8,121.8 L409.0,121.8 L409.1,121.8 L409.3,121.8 L409.4,121.8 L409.6,121.8 L409.7,121.9 L409.9,121.9 L410.1,121.9 L410.2,121.9 L410.4,122.0 L410.5,122.0 L410.7,122.0 L410.8,122.1 L411.0,122.1 L411.2,122.2 L411.3,122.2 L411.5,122.3 L411.6,122.4 L411.8,122.5 L412.0,122.6 L412.1,122.7 L412.3,122.9 L412.4,123.1 L412.6,123.3 L412.7,123.7 L412.9,124.1 L413.1,124.6 L413.2,125.2 L413.4,124.6 L413.5,124.1 L413.7,123.7 L413.8,123.3 L414.0,123.1 L414.2,122.9 L414.3,122.7 L414.5,122.6 L414.6,122.5 L414.8,122.4 L414.9,122.3 L415.1,122.2 L415.3,122.2 L415.4,122.1 L415.6,122.1 L415.7,122.1 L415.9,122.0 L416.0,122.0 L416.2,122.0 L416.4,121.9 L416.5,121.9 L416.7,121.9 L416.8,121.9 L417.0,121.9 L417.2,121.9 L417.3,121.8 L417.5,121.8 L417.6,121.8 L417.8,121.8 L417.9,121.8 L418.1,121.8 L418.3,121.8 L418.4,121.8 L418.6,121.8 L418.7,121.8 L418.9,121.8 L419.0,121.8 L419.2,121.7 L419.4,121.7 L419.5,121.7 L419.7,121.7 L419.8,121.7 L420.0,121.7 L420.1,121.7 L420.3,121.7 L420.5,121.7 L420.6,121.7 L420.8,121.7 L423.3,121.7 L425.8,121.7 L428.3,121.8 L430.9,121.9 L433.4,122.0 L435.9,122.2 L438.4,122.4 L441.0,122.9 L443.5,123.8 L443.6,123.9 L443.8,124.0 L443.9,124.1 L444.1,124.2 L444.3,124.3 L444.4,124.5 L444.6,124.6 L444.7,124.7 L444.9,124.9 L445.1,125.0 L445.2,125.2 L445.4,125.4 L445.5,125.6 L445.7,125.8 L445.8,126.1 L446.0,126.3 L446.2,126.6 L446.3,126.9 L446.5,127.3 L446.6,127.7 L446.8,128.1 L446.9,128.6 L447.1,129.2 L447.3,129.9 L447.4,130.6 L447.6,131.5 L447.7,132.5 L447.9,133.7 L448.0,135.2 L448.2,137.0 L448.4,139.1 L448.5,141.8 L448.7,145.2 L448.8,149.6 L449.0,154.9 L449.2,160.1 L449.3,154.9 L449.5,149.6 L449.6,145.2 L449.8,141.8 L449.9,139.1 L450.1,137.0 L450.3,135.2 L450.4,133.7 L450.6,132.5 L450.7,131.5 L450.9,130.6 L451.0,129.9 L451.2,129.2 L451.4,128.6 L451.5,128.1 L451.7,127.7 L451.8,127.3 L452.0,126.9 L452.1,126.6 L452.3,126.3 L452.5,126.1 L452.6,125.8 L452.8,125.6 L452.9,125.4 L453.1,125.2 L453.3,125.0 L453.4,124.9 L453.6,124.7 L453.7,124.6 L453.9,124.5 L454.0,124.4 L454.2,124.2 L454.4,124.1 L454.5,124.0 L454.7,123.9 L454.8,123.9 L455.0,123.8 L455.1,123.7 L455.3,123.6 L455.5,123.6 L455.6,123.5 L455.8,123.4 L455.9,123.4 L456.1,123.3 L456.2,123.3 L456.4,123.2 L456.6,123.2 L456.7,123.1 L459.2,122.6 L461.8,122.3 L464.3,122.1 L466.8,121.9 L469.3,121.9 L471.9,121.8 L474.4,121.8 L476.9,121.7 L479.4,121.7 L481.9,121.7 L484.5,121.7 L487.0,121.7 L489.5,121.8 L492.0,121.8 L494.5,121.8 L497.1,121.9 L499.6,122.0 L502.1,122.1 L504.6,122.3 L507.2,122.7 L509.7,123.3 L509.8,123.3 L510.0,123.4 L510.2,123.4 L510.3,123.5 L510.5,123.5 L510.6,123.6 L510.8,123.7 L510.9,123.8 L511.1,123.8 L511.3,123.9 L511.4,124.0 L511.6,124.1 L511.7,124.2 L511.9,124.3 L512.0,124.4 L512.2,124.6 L512.4,124.7 L512.5,124.8 L512.7,125.0 L512.8,125.2 L513.0,125.4 L513.1,125.6 L513.3,125.8 L513.5,126.0 L513.6,126.3 L513.8,126.6 L513.9,126.9 L514.1,127.3 L514.3,127.7 L514.4,128.2 L514.6,128.7 L514.7,129.3 L514.9,130.0 L515.0,130.8 L515.2,131.8 L515.4,133.0 L515.5,134.4 L515.7,136.1 L515.8,138.2 L516.0,140.9 L516.1,144.4 L516.3,148.8 L516.5,154.5 L516.6,160.3 L516.8,154.5 L516.9,148.8 L517.1,144.4 L517.2,140.9 L517.4,138.2 L517.6,136.1 L517.7,134.4 L517.9,133.0 L518.0,131.8 L518.2,130.8 L518.4,130.0 L518.5,129.3 L518.7,128.7 L518.8,128.2 L519.0,127.7 L519.1,127.3 L519.3,126.9 L519.5,126.6 L519.6,126.3 L519.8,126.1 L519.9,125.8 L520.1,125.6 L520.2,125.4 L520.4,125.2 L520.6,125.1 L520.7,124.9 L520.9,124.8 L521.0,124.6 L521.2,124.5 L521.3,124.4 L521.5,124.3 L521.7,124.2 L521.8,124.1 L522.0,124.0 L522.1,123.9 L522.3,123.8 L522.5,123.8 L522.6,123.7 L522.8,123.6 L522.9,123.6 L523.1,123.5 L523.2,123.5 L523.4,123.4 L523.6,123.4 L523.7,123.3 L523.9,123.3 L524.0,123.2 L524.2,123.2 L526.7,122.7 L529.2,122.5 L531.8,122.4 L534.3,122.3 L536.8,122.3 L539.3,122.3 L541.8,122.4 L544.4,122.5 L546.9,122.6 L549.4,122.9 L551.9,123.3 L554.4,124.1 L554.6,124.2 L554.8,124.2 L554.9,124.3 L555.1,124.4 L555.2,124.5 L555.4,124.6 L555.6,124.7 L555.7,124.8 L555.9,124.9 L556.0,125.1 L556.2,125.2 L556.3,125.3 L556.5,125.5 L556.7,125.7 L556.8,125.9 L557.0,126.1 L557.1,126.3 L557.3,126.6 L557.4,126.9 L557.6,127.2 L557.8,127.5 L557.9,127.9 L558.1,128.4 L558.2,128.9 L558.4,129.5 L558.5,130.1 L558.7,130.9 L558.9,131.9 L559.0,133.1 L559.2,134.5 L559.3,136.2 L559.5,138.4 L559.7,141.2 L559.8,144.9 L560.0,149.5 L560.1,154.3 L560.3,149.6 L560.4,145.0 L560.6,141.4 L560.8,138.6 L560.9,136.5 L561.1,134.8 L561.2,133.4 L561.4,132.3 L561.5,131.4 L561.7,130.7 L561.9,130.1 L562.0,129.5 L562.2,129.1 L562.3,128.7 L562.5,128.4 L562.6,128.1 L562.8,127.8 L563.0,127.6 L563.1,127.5 L563.3,127.3 L563.4,127.2 L563.6,127.1 L563.7,127.0 L563.9,126.9 L564.1,126.8 L564.2,126.8 L564.4,126.8 L564.5,126.8 L564.7,126.8 L564.9,126.8 L565.0,126.8 L565.2,126.9 L565.3,126.9 L565.5,127.0 L565.6,127.1 L565.8,127.2 L566.0,127.3 L566.1,127.5 L566.3,127.6 L566.4,127.8 L566.6,128.0 L566.7,128.3 L566.9,128.6 L567.1,128.9 L567.2,129.3 L567.4,129.7 L567.5,130.2 L567.7,130.8 L567.8,131.5 L568.0,132.3 L568.2,133.2 L568.3,134.3 L568.5,135.7 L568.6,137.4 L568.8,139.5 L569.0,142.2 L569.1,145.6 L569.3,150.1 L569.4,155.7 L569.6,161.6 L569.7,155.7 L569.9,150.0 L570.1,145.5 L570.2,142.0 L570.4,139.3 L570.5,137.2 L570.7,135.5 L570.8,134.1 L571.0,132.9 L571.2,131.9 L571.3,131.1 L571.5,130.4 L571.6,129.7 L571.8,129.2 L571.9,128.7 L572.1,128.3 L572.3,127.9 L572.4,127.6 L572.6,127.3 L572.7,127.0 L572.9,126.8 L573.0,126.6 L573.2,126.4 L573.4,126.2 L573.5,126.0 L573.7,125.8 L573.8,125.7 L574.0,125.6 L574.2,125.4 L574.3,125.3 L574.5,125.2 L574.6,125.1 L574.8,125.0 L574.9,124.9 L575.1,124.8 L575.3,124.8 L575.4,124.7 L575.6,124.6 L575.7,124.5 L575.9,124.5 L576.0,124.4 L576.2,124.4 L576.4,124.3 L576.5,124.3 L576.7,124.2 L576.8,124.2 L577.0,124.1 L577.1,124.1 L579.7,123.8 L582.2,123.8 L584.7,124.3 L584.9,124.4 L585.0,124.5 L585.2,124.5 L585.3,124.6 L585.5,124.7 L585.7,124.8 L585.8,124.9 L586.0,125.0 L586.1,125.1 L586.3,125.2 L586.4,125.3 L586.6,125.5 L586.8,125.6 L586.9,125.8 L587.1,126.0 L587.2,126.2 L587.4,126.4 L587.6,126.7 L587.7,126.9 L587.9,127.3 L588.0,127.6 L588.2,128.0 L588.3,128.5 L588.5,129.0 L588.7,129.6 L588.8,130.3 L589.0,131.1 L589.1,132.1 L589.3,133.3 L589.4,134.7 L589.6,136.5 L589.8,138.6 L589.9,141.4 L590.1,144.9 L590.2,149.2 L590.4,153.4 L590.5,149.1 L590.7,144.9 L590.9,141.4 L591.0,138.6 L591.2,136.4 L591.3,134.6 L591.5,133.2 L591.6,132.0 L591.8,131.0 L592.0,130.2 L592.1,129.5 L592.3,128.9 L592.4,128.3 L592.6,127.9 L592.8,127.5 L592.9,127.1 L593.1,126.8 L593.2,126.5 L593.4,126.2 L593.5,126.0 L593.7,125.7 L593.9,125.5 L594.0,125.4 L594.2,125.2 L594.3,125.0 L594.5,124.9 L594.6,124.8 L594.8,124.6 L595.0,124.5 L595.1,124.4 L595.3,124.3 L595.4,124.2 L595.6,124.1 L595.7,124.1 L595.9,124.0 L596.1,123.9 L596.2,123.8 L596.4,123.8 L596.5,123.7 L596.7,123.7 L596.9,123.6 L597.0,123.5 L597.2,123.5 L597.3,123.4 L597.5,123.4 L597.6,123.4 L597.8,123.3 L598.0,123.3 L600.5,122.8 L603.0,122.6 L605.5,122.4 L608.0,122.3 L610.6,122.3 L613.1,122.3 L615.6,122.4 L618.1,122.5 L620.7,122.9 L623.2,123.6 L623.3,123.6 L623.5,123.7 L623.6,123.8 L623.8,123.9 L624.0,123.9 L624.1,124.0 L624.3,124.1 L624.4,124.3 L624.6,124.4 L624.8,124.5 L624.9,124.6 L625.1,124.8 L625.2,124.9 L625.4,125.1 L625.5,125.3 L625.7,125.5 L625.9,125.8 L626.0,126.0 L626.2,126.3 L626.3,126.6 L626.5,127.0 L626.6,127.4 L626.8,127.8 L627.0,128.4 L627.1,129.0 L627.3,129.7 L627.4,130.5 L627.6,131.5 L627.7,132.7 L627.9,134.1 L628.1,135.9 L628.2,138.0 L628.4,140.8 L628.5,144.3 L628.7,148.6 L628.9,152.9 L629.0,148.6 L629.2,144.3 L629.3,140.8 L629.5,138.0 L629.6,135.8 L629.8,134.1 L630.0,132.6 L630.1,131.5 L630.3,130.5 L630.4,129.6 L630.6,128.9 L630.7,128.3 L630.9,127.8 L631.1,127.3 L631.2,126.9 L631.4,126.6 L631.5,126.2 L631.7,125.9 L631.8,125.7 L632.0,125.4 L632.2,125.2 L632.3,125.0 L632.5,124.9 L632.6,124.7 L632.8,124.5 L632.9,124.4 L633.1,124.3 L633.3,124.1 L633.4,124.0 L633.6,123.9 L633.7,123.8 L633.9,123.7 L634.1,123.6 L634.2,123.6 L634.4,123.5 L634.5,123.4 L634.7,123.4 L634.8,123.3 L635.0,123.2 L635.2,123.2 L635.3,123.1 L635.5,123.1 L635.6,123.0 L635.8,123.0 L635.9,122.9 L636.1,122.9 L636.3,122.8 L636.4,122.8 L638.9,122.3" fill="none" stroke="#2e7a50" stroke-width="0.7" opacity="0.45"/><line x1="326.2" y1="121.8" x2="640.2" y2="121.8" stroke="#3040b0" stroke-width="2"/><line x1="342.37670682730925" y1="121.8" x2="350.37670682730925" y2="121.8" stroke="#e03030" stroke-width="2"/><line x1="346.1598393574297" y1="121.8" x2="354.1598393574297" y2="121.8" stroke="#e03030" stroke-width="2"/><line x1="445.1518072289157" y1="121.8" x2="453.1518072289157" y2="121.8" stroke="#e03030" stroke-width="2"/><line x1="326.7" y1="120.8" x2="326.7" y2="145.5" stroke="#4a5ec8" stroke-width="1"/><rect x="326.2" y="120.8" width="314.00000000000006" height="49.39999999999999" fill="none" stroke="#000" stroke-width="1.6"/><path d="M337.55 170.2 V166.2 M337.55 120.8 V124.8 M350.16 170.2 V166.2 M350.16 120.8 V124.8 M362.77 170.2 V166.2 M362.77 120.8 V124.8 M375.38 170.2 V166.2 M375.38 120.8 V124.8 M387.99 170.2 V160.2 M387.99 120.8 V130.8 M400.60 170.2 V166.2 M400.60 120.8 V124.8 M413.21 170.2 V166.2 M413.21 120.8 V124.8 M425.82 170.2 V166.2 M425.82 120.8 V124.8 M438.43 170.2 V166.2 M438.43 120.8 V124.8 M451.04 170.2 V160.2 M451.04 120.8 V130.8 M463.65 170.2 V166.2 M463.65 120.8 V124.8 M476.26 170.2 V166.2 M476.26 120.8 V124.8 M488.87 170.2 V166.2 M488.87 120.8 V124.8 M501.49 170.2 V166.2 M501.49 120.8 V124.8 M514.10 170.2 V160.2 M514.10 120.8 V130.8 M526.71 170.2 V166.2 M526.71 120.8 V124.8 M539.32 170.2 V166.2 M539.32 120.8 V124.8 M551.93 170.2 V166.2 M551.93 120.8 V124.8 M564.54 170.2 V166.2 M564.54 120.8 V124.8 M577.15 170.2 V160.2 M577.15 120.8 V130.8 M589.76 170.2 V166.2 M589.76 120.8 V124.8 M602.37 170.2 V166.2 M602.37 120.8 V124.8 M614.98 170.2 V166.2 M614.98 120.8 V124.8 M627.59 170.2 V166.2 M627.59 120.8 V124.8 M640.20 170.2 V160.2 M640.20 120.8 V130.8 M326.2 170.20 H334.2 M640.2 170.20 H632.2 M326.2 168.22 H330.7 M640.2 168.22 H635.7 M326.2 166.25 H330.7 M640.2 166.25 H635.7 M326.2 164.27 H330.7 M640.2 164.27 H635.7 M326.2 162.30 H330.7 M640.2 162.30 H635.7 M326.2 160.32 H334.2 M640.2 160.32 H632.2 M326.2 158.34 H330.7 M640.2 158.34 H635.7 M326.2 156.37 H330.7 M640.2 156.37 H635.7 M326.2 154.39 H330.7 M640.2 154.39 H635.7 M326.2 152.42 H330.7 M640.2 152.42 H635.7 M326.2 150.44 H334.2 M640.2 150.44 H632.2 M326.2 148.46 H330.7 M640.2 148.46 H635.7 M326.2 146.49 H330.7 M640.2 146.49 H635.7 M326.2 144.51 H330.7 M640.2 144.51 H635.7 M326.2 142.54 H330.7 M640.2 142.54 H635.7 M326.2 140.56 H334.2 M640.2 140.56 H632.2 M326.2 138.58 H330.7 M640.2 138.58 H635.7 M326.2 136.61 H330.7 M640.2 136.61 H635.7 M326.2 134.63 H330.7 M640.2 134.63 H635.7 M326.2 132.66 H330.7 M640.2 132.66 H635.7 M326.2 130.68 H334.2 M640.2 130.68 H632.2 M326.2 128.70 H330.7 M640.2 128.70 H635.7 M326.2 126.73 H330.7 M640.2 126.73 H635.7 M326.2 124.75 H330.7 M640.2 124.75 H635.7 M326.2 122.78 H330.7 M640.2 122.78 H635.7 M326.2 120.80 H334.2 M640.2 120.80 H632.2 M323.2 150.44 H334.2 M323.2 140.56 H334.2" stroke="#000" stroke-width="1" fill="none" shape-rendering="crispEdges"/></svg>
<div class="t" style="top:114.94px;font-size:12px;line-height:12px;font-weight:normal;color:#000;right:863.50px;">1</div>
<div class="t" style="top:133.70px;font-size:12px;line-height:12px;font-weight:normal;color:#000;right:863.50px;">600m</div>
<div class="t" style="top:144.08px;font-size:12px;line-height:12px;font-weight:normal;color:#000;right:863.50px;">400m</div>
<div class="t" style="top:165.34px;font-size:12px;line-height:12px;font-weight:normal;color:#000;right:863.50px;">0</div>
<div class="t" style="top:178.64px;font-size:12px;line-height:12px;font-weight:normal;color:#000;left:325.20px;transform:translateX(-50%);">102</div>
<div class="t" style="top:178.64px;font-size:12px;line-height:12px;font-weight:normal;color:#000;left:387.99px;transform:translateX(-50%);">200</div>
<div class="t" style="top:178.64px;font-size:12px;line-height:12px;font-weight:normal;color:#000;left:451.04px;transform:translateX(-50%);">300</div>
<div class="t" style="top:178.64px;font-size:12px;line-height:12px;font-weight:normal;color:#000;left:514.10px;transform:translateX(-50%);">400</div>
<div class="t" style="top:178.64px;font-size:12px;line-height:12px;font-weight:normal;color:#000;left:577.15px;transform:translateX(-50%);">500</div>
<div class="t" style="top:178.64px;font-size:12px;line-height:12px;font-weight:normal;color:#000;left:617.50px;">600 Hz</div>
<div class="t" style="left:269.5px;top:144.5px;font-size:12px;line-height:12px;transform:translate(-50%,-50%) rotate(-90deg);transform-origin:50% 50%;">Real /</div>
<svg class="a" style="left:0;top:0" width="1180" height="674"><path d="M337.55 216.2 V402.3 M350.16 216.2 V402.3 M362.77 216.2 V402.3 M375.38 216.2 V402.3 M400.60 216.2 V402.3 M413.21 216.2 V402.3 M425.82 216.2 V402.3 M438.43 216.2 V402.3 M463.65 216.2 V402.3 M476.26 216.2 V402.3 M488.87 216.2 V402.3 M501.49 216.2 V402.3 M526.71 216.2 V402.3 M539.32 216.2 V402.3 M551.93 216.2 V402.3 M564.54 216.2 V402.3 M589.76 216.2 V402.3 M602.37 216.2 V402.3 M614.98 216.2 V402.3 M627.59 216.2 V402.3" stroke="#9a9a9a" stroke-width="0.9" stroke-dasharray="3.5,3.5" fill="none"/><path d="M387.99 216.2 V402.3 M451.04 216.2 V402.3 M514.10 216.2 V402.3 M577.15 216.2 V402.3 M326.2 321.39 H640.2 M326.2 240.47 H640.2" stroke="#c4c4c4" stroke-width="1.2" fill="none"/><path d="M325.9,325.7 L334.8,328.7 L339.3,334.6 L343.7,342.6 L347.3,328.7 L349.7,318.3 L354.1,322.2 L361.5,324.2 L379.3,325.7 L397.2,328.1 L403.1,330.2 L406.1,346.5 L409.0,331.7 L417.9,328.7 L438.7,330.2 L453.5,331.7 L474.3,332.3 L498.0,334.0 L512.9,336.1 L527.7,340.6 L539.6,346.5 L545.5,352.4 L550.0,379.1 L554.4,358.4 L557.4,352.4 L566.3,349.5 L575.2,352.4 L579.6,364.3 L584.1,352.4 L590.0,355.4 L593.0,365.8 L597.4,349.5 L604.9,343.5 L616.7,337.6 L628.6,330.2" stroke="#c2c2c2" stroke-width="1" fill="none"/><path d="M325.9,293.1 L337.8,285.7 L349.7,269.3 L354.1,266.4 L361.5,278.2 L379.3,284.2 L400.1,291.6 L415.0,299.0 L419.4,307.9 L422.4,328.7 L426.8,305.0 L438.7,284.2 L447.6,273.8 L459.5,284.2 L468.4,299.0 L471.9,328.7 L475.8,305.0 L492.1,284.2 L509.9,263.4 L515.8,254.5 L527.7,263.4 L545.5,270.8 L563.3,275.3 L587.1,281.2 L610.8,284.2 L616.7,310.9 L622.7,284.2 L628.6,279.7" stroke="#c2c2c2" stroke-width="1" fill="none"/><path d="M394.2,328.7 L409.0,307.9 L423.9,293.1 L438.7,281.2 L447.6,273.8" stroke="#c2c2c2" stroke-width="1" fill="none"/><path d="M447.6,273.8 L468.4,284.2 L486.2,299.0 L501.0,316.8 L506.9,337.6 L511.4,322.8 L527.7,299.0 L545.5,281.2 L563.3,269.3 L569.3,266.4" stroke="#c2c2c2" stroke-width="1" fill="none"/><path d="M515.8,254.5 L498.0,281.2 L486.2,299.0 L474.3,310.9" stroke="#c2c2c2" stroke-width="1" fill="none"/><path d="M341.8 286.4 H350.8 L346.3 294.8 Z M341.8 278.3 H350.8 L346.3 286.7 Z M341.8 270.2 H350.8 L346.3 278.6 Z M341.8 262.1 H350.8 L346.3 270.5 Z M341.8 254.1 H350.8 L346.3 262.5 Z M341.8 246.0 H350.8 L346.3 254.4 Z M341.8 237.9 H350.8 L346.3 246.3 Z M341.8 229.8 H350.8 L346.3 238.2 Z M341.8 221.7 H350.8 L346.3 230.1 Z M349.7 254.1 H358.7 L354.2 262.5 Z M349.7 246.0 H358.7 L354.2 254.4 Z M349.7 237.9 H358.7 L354.2 246.3 Z M349.7 229.8 H358.7 L354.2 238.2 Z M349.7 221.7 H358.7 L354.2 230.1 Z M349.7 310.7 H358.7 L354.2 319.1 Z M349.7 302.6 H358.7 L354.2 311.0 Z M349.7 383.5 H358.7 L354.2 391.9 Z M349.7 375.4 H358.7 L354.2 383.8 Z M349.7 367.3 H358.7 L354.2 375.7 Z M443.7 383.5 H452.7 L448.2 391.9 Z M443.7 326.9 H452.7 L448.2 335.3 Z M443.7 318.8 H452.7 L448.2 327.2 Z M443.7 310.7 H452.7 L448.2 319.1 Z M443.7 302.6 H452.7 L448.2 311.0 Z M443.7 294.5 H452.7 L448.2 302.9 Z M443.7 286.4 H452.7 L448.2 294.8 Z M443.7 278.3 H452.7 L448.2 286.7 Z M443.7 270.2 H452.7 L448.2 278.6 Z M443.7 254.1 H452.7 L448.2 262.5 Z M443.7 246.0 H452.7 L448.2 254.4 Z M443.7 237.9 H452.7 L448.2 246.3 Z M443.7 229.8 H452.7 L448.2 238.2 Z M443.7 221.7 H452.7 L448.2 230.1 Z M512.7 383.5 H521.7 L517.2 391.9 Z M512.7 375.4 H521.7 L517.2 383.8 Z M512.7 359.2 H521.7 L517.2 367.6 Z M512.7 351.2 H521.7 L517.2 359.6 Z M512.7 335.0 H521.7 L517.2 343.4 Z M512.7 326.9 H521.7 L517.2 335.3 Z M512.7 318.8 H521.7 L517.2 327.2 Z M512.7 310.7 H521.7 L517.2 319.1 Z M512.7 302.6 H521.7 L517.2 311.0 Z M512.7 294.5 H521.7 L517.2 302.9 Z M512.7 286.4 H521.7 L517.2 294.8 Z M512.7 270.2 H521.7 L517.2 278.6 Z M512.7 262.1 H521.7 L517.2 270.5 Z M512.7 254.1 H521.7 L517.2 262.5 Z M512.7 246.0 H521.7 L517.2 254.4 Z M512.7 237.9 H521.7 L517.2 246.3 Z M512.7 229.8 H521.7 L517.2 238.2 Z M512.7 221.7 H521.7 L517.2 230.1 Z M555.5 326.9 H564.5 L560.0 335.3 Z M555.5 318.8 H564.5 L560.0 327.2 Z M555.5 310.7 H564.5 L560.0 319.1 Z M555.5 302.6 H564.5 L560.0 311.0 Z M555.5 294.5 H564.5 L560.0 302.9 Z M555.5 286.4 H564.5 L560.0 294.8 Z M555.5 278.3 H564.5 L560.0 286.7 Z M555.5 270.2 H564.5 L560.0 278.6 Z M555.5 262.1 H564.5 L560.0 270.5 Z M555.5 254.1 H564.5 L560.0 262.5 Z M555.5 246.0 H564.5 L560.0 254.4 Z M555.5 237.9 H564.5 L560.0 246.3 Z M555.5 229.8 H564.5 L560.0 238.2 Z M555.5 221.7 H564.5 L560.0 230.1 Z M555.5 383.5 H564.5 L560.0 391.9 Z M555.5 375.4 H564.5 L560.0 383.8 Z M555.5 359.2 H564.5 L560.0 367.6 Z M555.5 351.2 H564.5 L560.0 359.6 Z M555.5 343.1 H564.5 L560.0 351.5 Z M564.9 383.5 H573.9 L569.4 391.9 Z M564.9 375.4 H573.9 L569.4 383.8 Z M564.9 367.3 H573.9 L569.4 375.7 Z M564.9 359.2 H573.9 L569.4 367.6 Z M564.9 351.2 H573.9 L569.4 359.6 Z M564.9 343.1 H573.9 L569.4 351.5 Z M564.9 335.0 H573.9 L569.4 343.4 Z M564.9 326.9 H573.9 L569.4 335.3 Z M564.9 318.8 H573.9 L569.4 327.2 Z M564.9 310.7 H573.9 L569.4 319.1 Z M564.9 302.6 H573.9 L569.4 311.0 Z M564.9 294.5 H573.9 L569.4 302.9 Z M564.9 270.2 H573.9 L569.4 278.6 Z M564.9 262.1 H573.9 L569.4 270.5 Z M564.9 254.1 H573.9 L569.4 262.5 Z M564.9 246.0 H573.9 L569.4 254.4 Z M564.9 221.7 H573.9 L569.4 230.1 Z M586.1 286.4 H595.1 L590.6 294.8 Z M586.1 278.3 H595.1 L590.6 286.7 Z M586.1 270.2 H595.1 L590.6 278.6 Z M586.1 343.1 H595.1 L590.6 351.5 Z M586.1 375.4 H595.1 L590.6 383.8 Z M586.1 367.3 H595.1 L590.6 375.7 Z M624.9 326.9 H633.9 L629.4 335.3 Z M624.9 318.8 H633.9 L629.4 327.2 Z M624.9 310.7 H633.9 L629.4 319.1 Z M624.9 302.6 H633.9 L629.4 311.0 Z M624.9 294.5 H633.9 L629.4 302.9 Z M624.9 286.4 H633.9 L629.4 294.8 Z M624.9 278.3 H633.9 L629.4 286.7 Z M624.9 270.2 H633.9 L629.4 278.6 Z M624.9 262.1 H633.9 L629.4 270.5 Z M624.9 254.1 H633.9 L629.4 262.5 Z M624.9 246.0 H633.9 L629.4 254.4 Z M624.9 237.9 H633.9 L629.4 246.3 Z M624.9 229.8 H633.9 L629.4 238.2 Z M624.9 221.7 H633.9 L629.4 230.1 Z M624.9 383.5 H633.9 L629.4 391.9 Z M624.9 375.4 H633.9 L629.4 383.8 Z M624.9 351.2 H633.9 L629.4 359.6 Z" stroke="#3545b8" stroke-width="1.1" fill="none"/><path d="M350.2 293.1 L358.2 301.1 M358.2 293.1 L350.2 301.1 M350.2 285.0 L358.2 293.0 M358.2 285.0 L350.2 293.0 M350.2 276.9 L358.2 284.9 M358.2 276.9 L350.2 284.9 M350.2 268.8 L358.2 276.8 M358.2 268.8 L350.2 276.8 M350.2 260.7 L358.2 268.7 M358.2 260.7 L350.2 268.7 M350.2 252.7 L358.2 260.7 M358.2 252.7 L350.2 260.7 M350.2 244.6 L358.2 252.6 M358.2 244.6 L350.2 252.6 M350.2 236.5 L358.2 244.5 M358.2 236.5 L350.2 244.5 M444.2 382.1 L452.2 390.1 M452.2 382.1 L444.2 390.1 M444.2 374.0 L452.2 382.0 M452.2 374.0 L444.2 382.0 M444.2 365.9 L452.2 373.9 M452.2 365.9 L444.2 373.9 M444.2 357.8 L452.2 365.8 M452.2 357.8 L444.2 365.8 M444.2 349.8 L452.2 357.8 M452.2 349.8 L444.2 357.8 M444.2 341.7 L452.2 349.7 M452.2 341.7 L444.2 349.7 M444.2 333.6 L452.2 341.6 M452.2 333.6 L444.2 341.6 M444.2 325.5 L452.2 333.5 M452.2 325.5 L444.2 333.5 M444.2 317.4 L452.2 325.4 M452.2 317.4 L444.2 325.4 M444.2 309.3 L452.2 317.3 M452.2 309.3 L444.2 317.3 M444.2 301.2 L452.2 309.2 M452.2 301.2 L444.2 309.2 M444.2 293.1 L452.2 301.1 M452.2 293.1 L444.2 301.1 M444.2 285.0 L452.2 293.0 M452.2 285.0 L444.2 293.0 M444.2 276.9 L452.2 284.9 M452.2 276.9 L444.2 284.9 M444.2 268.8 L452.2 276.8 M452.2 268.8 L444.2 276.8 M444.2 260.7 L452.2 268.7 M452.2 260.7 L444.2 268.7 M444.2 252.7 L452.2 260.7 M452.2 252.7 L444.2 260.7 M444.2 244.6 L452.2 252.6 M452.2 244.6 L444.2 252.6 M444.2 236.5 L452.2 244.5 M452.2 236.5 L444.2 244.5 M444.2 228.4 L452.2 236.4 M452.2 228.4 L444.2 236.4 M444.2 220.3 L452.2 228.3 M452.2 220.3 L444.2 228.3 M513.2 365.9 L521.2 373.9 M521.2 365.9 L513.2 373.9 M513.2 341.7 L521.2 349.7 M521.2 341.7 L513.2 349.7 M513.2 333.6 L521.2 341.6 M521.2 333.6 L513.2 341.6 M513.2 276.9 L521.2 284.9 M521.2 276.9 L513.2 284.9 M513.2 244.6 L521.2 252.6 M521.2 244.6 L513.2 252.6 M513.2 228.4 L521.2 236.4 M521.2 228.4 L513.2 236.4 M513.2 220.3 L521.2 228.3 M521.2 220.3 L513.2 228.3 M531.5 309.3 L539.5 317.3 M539.5 309.3 L531.5 317.3 M565.4 285.0 L573.4 293.0 M573.4 285.0 L565.4 293.0 M565.4 236.5 L573.4 244.5 M573.4 236.5 L565.4 244.5 M565.4 228.4 L573.4 236.4 M573.4 228.4 L565.4 236.4 M586.6 228.4 L594.6 236.4 M594.6 228.4 L586.6 236.4 M586.6 220.3 L594.6 228.3 M594.6 220.3 L586.6 228.3" stroke="#3d8a3d" stroke-width="1.1" fill="none"/><path d="M346.3 300.2 L351.3 305.2 L346.3 310.2 L341.3 305.2 Z M346.3 292.1 L351.3 297.1 L346.3 302.1 L341.3 297.1 Z M354.2 348.8 L359.2 353.8 L354.2 358.8 L349.2 353.8 Z M517.2 364.9 L522.2 369.9 L517.2 374.9 L512.2 369.9 Z M517.2 340.7 L522.2 345.7 L517.2 350.7 L512.2 345.7 Z M517.2 275.9 L522.2 280.9 L517.2 285.9 L512.2 280.9 Z M629.4 364.9 L634.4 369.9 L629.4 374.9 L624.4 369.9 Z M629.4 356.8 L634.4 361.8 L629.4 366.8 L624.4 361.8 Z M629.4 340.7 L634.4 345.7 L629.4 350.7 L624.4 345.7 Z M629.4 332.6 L634.4 337.6 L629.4 342.6 L624.4 337.6 Z" stroke="#f06040" stroke-width="1.2" fill="none"/><path d="M444.2 321.4 H452.2 M448.2 317.4 V325.4 M445.2 318.4 L451.2 324.4 M451.2 318.4 L445.2 324.4 M444.2 289.0 H452.2 M448.2 285.0 V293.0 M445.2 286.0 L451.2 292.0 M451.2 286.0 L445.2 292.0" stroke="#b040c0" stroke-width="1.1" fill="none"/><path d="M350.0 349.6 h8.4 v8.4 h-8.4 Z M444.0 260.5 h8.4 v8.4 h-8.4 Z M565.2 244.4 h8.4 v8.4 h-8.4 Z M625.2 252.5 h8.4 v8.4 h-8.4 Z" stroke="#000" stroke-width="1.6" fill="none"/><rect x="326.2" y="216.2" width="314.00000000000006" height="186.10000000000002" fill="none" stroke="#000" stroke-width="1.6"/><path d="M337.55 402.3 V397.3 M337.55 216.2 V221.2 M350.16 402.3 V397.3 M350.16 216.2 V221.2 M362.77 402.3 V397.3 M362.77 216.2 V221.2 M375.38 402.3 V397.3 M375.38 216.2 V221.2 M387.99 406.3 V392.3 M387.99 216.2 V226.2 M400.60 402.3 V397.3 M400.60 216.2 V221.2 M413.21 402.3 V397.3 M413.21 216.2 V221.2 M425.82 402.3 V397.3 M425.82 216.2 V221.2 M438.43 402.3 V397.3 M438.43 216.2 V221.2 M451.04 406.3 V392.3 M451.04 216.2 V226.2 M463.65 402.3 V397.3 M463.65 216.2 V221.2 M476.26 402.3 V397.3 M476.26 216.2 V221.2 M488.87 402.3 V397.3 M488.87 216.2 V221.2 M501.49 402.3 V397.3 M501.49 216.2 V221.2 M514.10 406.3 V392.3 M514.10 216.2 V226.2 M526.71 402.3 V397.3 M526.71 216.2 V221.2 M539.32 402.3 V397.3 M539.32 216.2 V221.2 M551.93 402.3 V397.3 M551.93 216.2 V221.2 M564.54 402.3 V397.3 M564.54 216.2 V221.2 M577.15 406.3 V392.3 M577.15 216.2 V226.2 M589.76 402.3 V397.3 M589.76 216.2 V221.2 M602.37 402.3 V397.3 M602.37 216.2 V221.2 M614.98 402.3 V397.3 M614.98 216.2 V221.2 M627.59 402.3 V397.3 M627.59 216.2 V221.2 M640.20 406.3 V392.3 M640.20 216.2 V226.2 M326.2 394.21 H332.2 M326.2 386.12 H332.2 M326.2 378.03 H332.2 M326.2 369.93 H332.2 M326.2 361.84 H332.2 M326.2 353.75 H332.2 M326.2 345.66 H332.2 M326.2 337.57 H332.2 M326.2 329.48 H332.2 M326.2 321.39 H332.2 M326.2 313.30 H332.2 M326.2 305.20 H332.2 M326.2 297.11 H332.2 M326.2 289.02 H332.2 M326.2 280.93 H332.2 M326.2 272.84 H332.2 M326.2 264.75 H332.2 M326.2 256.66 H332.2 M326.2 248.57 H332.2 M326.2 240.47 H332.2 M326.2 232.38 H332.2 M326.2 224.29 H332.2 M319.2 321.39 H326.2 M319.2 240.47 H326.2 M640.2 402.30 H633.2 M640.2 394.30 H636.2 M640.2 389.62 H636.2 M640.2 386.29 H636.2 M640.2 383.72 H636.2 M640.2 381.61 H636.2 M640.2 379.83 H636.2 M640.2 378.29 H636.2 M640.2 376.93 H636.2 M640.2 375.71 H633.2 M640.2 367.71 H636.2 M640.2 363.03 H636.2 M640.2 359.71 H636.2 M640.2 357.13 H636.2 M640.2 355.03 H636.2 M640.2 353.25 H636.2 M640.2 351.70 H636.2 M640.2 350.35 H636.2 M640.2 349.13 H633.2 M640.2 341.13 H636.2 M640.2 336.44 H636.2 M640.2 333.12 H636.2 M640.2 330.55 H636.2 M640.2 328.44 H636.2 M640.2 326.66 H636.2 M640.2 325.12 H636.2 M640.2 323.76 H636.2 M640.2 322.54 H633.2 M640.2 314.54 H636.2 M640.2 309.86 H636.2 M640.2 306.54 H636.2 M640.2 303.96 H636.2 M640.2 301.86 H636.2 M640.2 300.08 H636.2 M640.2 298.53 H636.2 M640.2 297.17 H636.2 M640.2 295.96 H633.2 M640.2 287.95 H636.2 M640.2 283.27 H636.2 M640.2 279.95 H636.2 M640.2 277.37 H636.2 M640.2 275.27 H636.2 M640.2 273.49 H636.2 M640.2 271.95 H636.2 M640.2 270.59 H636.2 M640.2 269.37 H633.2 M640.2 261.37 H636.2 M640.2 256.69 H636.2 M640.2 253.37 H636.2 M640.2 250.79 H636.2 M640.2 248.68 H636.2 M640.2 246.90 H636.2 M640.2 245.36 H636.2 M640.2 244.00 H636.2 M640.2 242.79 H633.2 M640.2 234.78 H636.2 M640.2 230.10 H636.2 M640.2 226.78 H636.2 M640.2 224.20 H636.2 M640.2 222.10 H636.2 M640.2 220.32 H636.2 M640.2 218.78 H636.2 M640.2 217.42 H636.2 M640.2 375.71 H645.2 M640.2 349.13 H645.2 M640.2 322.54 H645.2 M640.2 295.96 H645.2 M640.2 269.37 H645.2 M640.2 242.79 H645.2 M640.2 216.20 H645.2" stroke="#000" stroke-width="1" fill="none" shape-rendering="crispEdges"/></svg>
<div class="t" style="top:210.34px;font-size:12px;line-height:12px;font-weight:normal;color:#000;right:863.00px;">23</div>
<div class="t" style="top:234.62px;font-size:12px;line-height:12px;font-weight:normal;color:#000;right:863.00px;">20</div>
<div class="t" style="top:315.53px;font-size:12px;line-height:12px;font-weight:normal;color:#000;right:863.00px;">10</div>
<div class="t" style="top:396.44px;font-size:12px;line-height:12px;font-weight:normal;color:#000;right:863.00px;">0</div>
<div class="t" style="top:410.34px;font-size:12px;line-height:12px;font-weight:normal;color:#000;left:325.20px;transform:translateX(-50%);">102</div>
<div class="t" style="top:410.34px;font-size:12px;line-height:12px;font-weight:normal;color:#000;left:387.99px;transform:translateX(-50%);">200</div>
<div class="t" style="top:410.34px;font-size:12px;line-height:12px;font-weight:normal;color:#000;left:451.04px;transform:translateX(-50%);">300</div>
<div class="t" style="top:410.34px;font-size:12px;line-height:12px;font-weight:normal;color:#000;left:514.10px;transform:translateX(-50%);">400</div>
<div class="t" style="top:410.34px;font-size:12px;line-height:12px;font-weight:normal;color:#000;left:577.15px;transform:translateX(-50%);">500</div>
<div class="t" style="top:410.34px;font-size:12px;line-height:12px;font-weight:normal;color:#000;left:617.50px;">600 Hz</div>
<div class="t" style="top:210.34px;font-size:12px;line-height:12px;font-weight:normal;color:#000;left:648.00px;">100k</div>
<div class="t" style="top:236.93px;font-size:12px;line-height:12px;font-weight:normal;color:#000;left:648.00px;">10k</div>
<div class="t" style="top:263.51px;font-size:12px;line-height:12px;font-weight:normal;color:#000;left:648.00px;">1k</div>
<div class="t" style="top:290.10px;font-size:12px;line-height:12px;font-weight:normal;color:#000;left:648.00px;">100</div>
<div class="t" style="top:316.68px;font-size:12px;line-height:12px;font-weight:normal;color:#000;left:648.00px;">10</div>
<div class="t" style="top:343.27px;font-size:12px;line-height:12px;font-weight:normal;color:#000;left:648.00px;">1</div>
<div class="t" style="top:369.86px;font-size:12px;line-height:12px;font-weight:normal;color:#000;left:648.00px;">100m</div>
<div class="t" style="top:396.44px;font-size:12px;line-height:12px;font-weight:normal;color:#000;left:648.00px;">10m</div>
<div class="t" style="left:696.5px;top:310px;font-size:12px;line-height:12px;transform:translate(-50%,-50%) rotate(-90deg);">Log g/N</div>
<div class="a" style="left:124px;top:446px;width:593px;height:194px;border:1px solid #B8B4A2;box-sizing:border-box;"></div>
<div class="a" style="left:125px;top:447px;width:593px;height:194px;border:1px solid #fff;box-sizing:border-box;"></div>
<div class="a" style="left:125px;top:447px;width:591px;height:192px;border:0;"></div>
<div class="a" style="left:132px;top:445px;width:87px;height:4px;background:#ECE9D8;"></div>
<div class="t" style="top:442.19px;font-size:11px;line-height:11px;font-weight:normal;color:#000;letter-spacing:-0.2px;left:140.50px;">Manage Modes</div>
<div class="a" style="left:140px;top:464px;width:564px;height:121px;background:#ECE9D8;border-style:solid;border-width:1px;border-color:#1a1a1a;box-sizing:border-box;"></div>
<div class="a" style="left:141px;top:583px;width:562px;height:1px;background:#404040;"></div>
<div class="a" style="left:141px;top:465px;width:545px;height:102.5px;overflow:hidden;">
<div class="a" style="left:0.0px;top:0.0px;width:34.0px;height:34.0px;background:#ECE9D8;border-style:solid;border-width:1px 1px 1px 1px;border-color:#fff #ACA899 #ACA899 #fff;box-sizing:border-box;"></div>
<div class="a" style="left:34.0px;top:0.0px;width:79.5px;height:34.0px;background:#ECE9D8;border-style:solid;border-width:1px 1px 1px 1px;border-color:#fff #ACA899 #ACA899 #fff;box-sizing:border-box;"></div>
<div class="a" style="left:113.5px;top:0.0px;width:74.5px;height:34.0px;background:#ECE9D8;border-style:solid;border-width:1px 1px 1px 1px;border-color:#fff #ACA899 #ACA899 #fff;box-sizing:border-box;"></div>
<div class="a" style="left:188.0px;top:0.0px;width:75.5px;height:34.0px;background:#ECE9D8;border-style:solid;border-width:1px 1px 1px 1px;border-color:#fff #ACA899 #ACA899 #fff;box-sizing:border-box;"></div>
<div class="a" style="left:263.5px;top:0.0px;width:75.0px;height:34.0px;background:#ECE9D8;border-style:solid;border-width:1px 1px 1px 1px;border-color:#fff #ACA899 #ACA899 #fff;box-sizing:border-box;"></div>
<div class="a" style="left:338.5px;top:0.0px;width:86.0px;height:34.0px;background:#ECE9D8;border-style:solid;border-width:1px 1px 1px 1px;border-color:#fff #ACA899 #ACA899 #fff;box-sizing:border-box;"></div>
<div class="a" style="left:0.0px;top:34.0px;width:34.0px;height:20.3px;background:#A9BDE2;border-style:solid;border-width:1px;border-color:#fff #ACA899 #ACA899 #fff;box-sizing:border-box;"></div>
<div class="a" style="left:34.0px;top:34.0px;width:79.5px;height:20.3px;background:#A9BDE2;border-style:solid;border-width:0 1px 1px 0;border-color:#D4D0C8;box-sizing:border-box;"></div>
<div class="a" style="left:113.5px;top:34.0px;width:74.5px;height:20.3px;background:#A9BDE2;border-style:solid;border-width:0 1px 1px 0;border-color:#D4D0C8;box-sizing:border-box;"></div>
<div class="a" style="left:188.0px;top:34.0px;width:75.5px;height:20.3px;background:#A9BDE2;border-style:solid;border-width:0 1px 1px 0;border-color:#D4D0C8;box-sizing:border-box;"></div>
<div class="a" style="left:263.5px;top:34.0px;width:75.0px;height:20.3px;background:#A9BDE2;border-style:solid;border-width:0 1px 1px 0;border-color:#D4D0C8;box-sizing:border-box;"></div>
<div class="a" style="left:338.5px;top:34.0px;width:86.0px;height:20.3px;background:#A9BDE2;border-style:solid;border-width:0 1px 1px 0;border-color:#D4D0C8;box-sizing:border-box;"></div>
<div class="a" style="left:35.0px;top:34.0px;width:78.5px;height:20.3px;background:#FFFCE6;border:1px dotted #000;box-sizing:border-box;"></div>
<div class="t" style="top:39.69px;font-size:11px;line-height:11px;color:#1a2550;letter-spacing:-0.2px;left:17.00px;transform:translateX(-50%);">1</div>
<div class="t" style="top:37.19px;font-size:11px;line-height:11px;color:#1a2550;letter-spacing:-0.2px;right:435.50px;">146.489</div>
<div class="t" style="top:37.19px;font-size:11px;line-height:11px;color:#1a2550;letter-spacing:-0.2px;right:360.50px;">0.747</div>
<div class="t" style="top:37.19px;font-size:11px;line-height:11px;color:#1a2550;letter-spacing:-0.2px;left:191.00px;">Stable</div>
<div class="t" style="top:37.19px;font-size:11px;line-height:11px;color:#1a2550;letter-spacing:-0.2px;right:210.00px;">99.82</div>
<div class="t" style="top:37.19px;font-size:11px;line-height:11px;color:#1a2550;letter-spacing:-0.2px;right:124.00px;">0.011</div>
<div class="a" style="left:0.0px;top:54.3px;width:34.0px;height:19.9px;background:#ECE9D8;border-style:solid;border-width:1px;border-color:#fff #ACA899 #ACA899 #fff;box-sizing:border-box;"></div>
<div class="a" style="left:34.0px;top:54.3px;width:79.5px;height:19.9px;background:#fff;border-style:solid;border-width:0 1px 1px 0;border-color:#D4D0C8;box-sizing:border-box;"></div>
<div class="a" style="left:113.5px;top:54.3px;width:74.5px;height:19.9px;background:#fff;border-style:solid;border-width:0 1px 1px 0;border-color:#D4D0C8;box-sizing:border-box;"></div>
<div class="a" style="left:188.0px;top:54.3px;width:75.5px;height:19.9px;background:#fff;border-style:solid;border-width:0 1px 1px 0;border-color:#D4D0C8;box-sizing:border-box;"></div>
<div class="a" style="left:263.5px;top:54.3px;width:75.0px;height:19.9px;background:#fff;border-style:solid;border-width:0 1px 1px 0;border-color:#D4D0C8;box-sizing:border-box;"></div>
<div class="a" style="left:338.5px;top:54.3px;width:86.0px;height:19.9px;background:#fff;border-style:solid;border-width:0 1px 1px 0;border-color:#D4D0C8;box-sizing:border-box;"></div>
<div class="t" style="top:59.99px;font-size:11px;line-height:11px;color:#000;letter-spacing:-0.2px;left:17.00px;transform:translateX(-50%);">2</div>
<div class="t" style="top:57.49px;font-size:11px;line-height:11px;color:#000;letter-spacing:-0.2px;right:435.50px;">296.762</div>
<div class="t" style="top:57.49px;font-size:11px;line-height:11px;color:#000;letter-spacing:-0.2px;right:360.50px;">0.337</div>
<div class="t" style="top:57.49px;font-size:11px;line-height:11px;color:#000;letter-spacing:-0.2px;left:191.00px;">Frequency</div>
<div class="t" style="top:57.49px;font-size:11px;line-height:11px;color:#000;letter-spacing:-0.2px;right:210.00px;">8.97</div>
<div class="t" style="top:57.49px;font-size:11px;line-height:11px;color:#000;letter-spacing:-0.2px;right:124.00px;">0.103</div>
<div class="a" style="left:0.0px;top:74.2px;width:34.0px;height:20.0px;background:#ECE9D8;border-style:solid;border-width:1px;border-color:#fff #ACA899 #ACA899 #fff;box-sizing:border-box;"></div>
<div class="a" style="left:34.0px;top:74.2px;width:79.5px;height:20.0px;background:#fff;border-style:solid;border-width:0 1px 1px 0;border-color:#D4D0C8;box-sizing:border-box;"></div>
<div class="a" style="left:113.5px;top:74.2px;width:74.5px;height:20.0px;background:#fff;border-style:solid;border-width:0 1px 1px 0;border-color:#D4D0C8;box-sizing:border-box;"></div>
<div class="a" style="left:188.0px;top:74.2px;width:75.5px;height:20.0px;background:#fff;border-style:solid;border-width:0 1px 1px 0;border-color:#D4D0C8;box-sizing:border-box;"></div>
<div class="a" style="left:263.5px;top:74.2px;width:75.0px;height:20.0px;background:#fff;border-style:solid;border-width:0 1px 1px 0;border-color:#D4D0C8;box-sizing:border-box;"></div>
<div class="a" style="left:338.5px;top:74.2px;width:86.0px;height:20.0px;background:#fff;border-style:solid;border-width:0 1px 1px 0;border-color:#D4D0C8;box-sizing:border-box;"></div>
<div class="t" style="top:79.89px;font-size:11px;line-height:11px;color:#000;letter-spacing:-0.2px;left:17.00px;transform:translateX(-50%);">3</div>
<div class="t" style="top:77.39px;font-size:11px;line-height:11px;color:#000;letter-spacing:-0.2px;right:435.50px;">488.099</div>
<div class="t" style="top:77.39px;font-size:11px;line-height:11px;color:#000;letter-spacing:-0.2px;right:360.50px;">0.161</div>
<div class="t" style="top:77.39px;font-size:11px;line-height:11px;color:#000;letter-spacing:-0.2px;left:191.00px;">Freq, Vector</div>
<div class="t" style="top:77.39px;font-size:11px;line-height:11px;color:#000;letter-spacing:-0.2px;right:210.00px;">96.46</div>
<div class="t" style="top:77.39px;font-size:11px;line-height:11px;color:#000;letter-spacing:-0.2px;right:124.00px;">0.129</div>
<div class="a" style="left:0.0px;top:94.2px;width:34.0px;height:20.8px;background:#ECE9D8;border-style:solid;border-width:1px;border-color:#fff #ACA899 #ACA899 #fff;box-sizing:border-box;"></div>
<div class="a" style="left:34.0px;top:94.2px;width:79.5px;height:20.8px;background:#fff;border-style:solid;border-width:0 1px 1px 0;border-color:#D4D0C8;box-sizing:border-box;"></div>
<div class="a" style="left:113.5px;top:94.2px;width:74.5px;height:20.8px;background:#fff;border-style:solid;border-width:0 1px 1px 0;border-color:#D4D0C8;box-sizing:border-box;"></div>
<div class="a" style="left:188.0px;top:94.2px;width:75.5px;height:20.8px;background:#fff;border-style:solid;border-width:0 1px 1px 0;border-color:#D4D0C8;box-sizing:border-box;"></div>
<div class="a" style="left:263.5px;top:94.2px;width:75.0px;height:20.8px;background:#fff;border-style:solid;border-width:0 1px 1px 0;border-color:#D4D0C8;box-sizing:border-box;"></div>
<div class="a" style="left:338.5px;top:94.2px;width:86.0px;height:20.8px;background:#fff;border-style:solid;border-width:0 1px 1px 0;border-color:#D4D0C8;box-sizing:border-box;"></div>
<div class="t" style="top:99.89px;font-size:11px;line-height:11px;color:#000;letter-spacing:-0.2px;left:17.00px;transform:translateX(-50%);">4</div>
<div class="t" style="top:97.39px;font-size:11px;line-height:11px;color:#000;letter-spacing:-0.2px;right:435.50px;">592.951</div>
<div class="t" style="top:97.39px;font-size:11px;line-height:11px;color:#000;letter-spacing:-0.2px;right:360.50px;">0.169</div>
<div class="t" style="top:97.39px;font-size:11px;line-height:11px;color:#000;letter-spacing:-0.2px;left:191.00px;">Freq, Vector</div>
<div class="t" style="top:97.39px;font-size:11px;line-height:11px;color:#000;letter-spacing:-0.2px;right:210.00px;">99.8</div>
<div class="t" style="top:97.39px;font-size:11px;line-height:11px;color:#000;letter-spacing:-0.2px;right:124.00px;">0.024</div>
<div class="t" style="top:6.89px;font-size:11px;line-height:11px;color:#000;letter-spacing:-0.2px;left:74.00px;transform:translateX(-50%);">Frequency</div>
<div class="t" style="top:18.69px;font-size:11px;line-height:11px;color:#000;letter-spacing:-0.2px;left:74.00px;transform:translateX(-50%);">(Hz)</div>
<div class="t" style="top:12.69px;font-size:11px;line-height:11px;color:#000;letter-spacing:-0.2px;left:151.00px;transform:translateX(-50%);">Damping (%)</div>
<div class="t" style="top:6.89px;font-size:11px;line-height:11px;color:#000;letter-spacing:-0.2px;left:226.00px;transform:translateX(-50%);">Stability</div>
<div class="t" style="top:18.69px;font-size:11px;line-height:11px;color:#000;letter-spacing:-0.2px;left:226.00px;transform:translateX(-50%);">Level</div>
<div class="t" style="top:2.69px;font-size:11px;line-height:11px;color:#000;letter-spacing:-0.2px;left:301.00px;transform:translateX(-50%);">Modal Phase</div>
<div class="t" style="top:15.19px;font-size:11px;line-height:11px;color:#000;letter-spacing:-0.2px;left:301.00px;transform:translateX(-50%);">Colinearity</div>
<div class="t" style="top:6.19px;font-size:11px;line-height:11px;color:#000;letter-spacing:-0.2px;left:381.00px;transform:translateX(-50%);">Mean Phase</div>
<div class="t" style="top:18.49px;font-size:11px;line-height:11px;color:#000;letter-spacing:-0.2px;left:381.00px;transform:translateX(-50%);">Deviation (deg)</div>
</div>
<div class="a" style="left:405px;top:494px;width:74px;height:4.5px;overflow:hidden;"><div class="t" style="left:37px;top:-2.8px;font-size:11px;line-height:11px;transform:translateX(-50%);">(%)</div></div>
<div class="a" style="left:686px;top:465px;width:17px;height:102px;background:#F4F3EE;"></div>
<div class="a" style="left:686px;top:487px;width:17px;height:64px;background-image:linear-gradient(45deg,#ECE9D8 25%,transparent 25%,transparent 75%,#ECE9D8 75%),linear-gradient(45deg,#ECE9D8 25%,#fff 25%,#fff 75%,#ECE9D8 75%);background-size:2px 2px;background-position:0 0,1px 1px;opacity:0.8"></div>
<div class="a" style="left:686px;top:468px;width:17px;height:20px;background:#ECE9D8;border-style:solid;border-width:1px 2px 2px 1px;border-color:#fff #716F64 #716F64 #fff;box-sizing:border-box;"></div>
<div class="a" style="left:686px;top:488px;width:17px;height:20px;background:#ECE9D8;border-style:solid;border-width:1px 2px 2px 1px;border-color:#fff #716F64 #716F64 #fff;box-sizing:border-box;"></div>
<div class="a" style="left:686px;top:551px;width:17px;height:16px;background:#ECE9D8;border-style:solid;border-width:1px 2px 2px 1px;border-color:#fff #716F64 #716F64 #fff;box-sizing:border-box;"></div>
<svg class="a" style="left:0;top:0" width="1180" height="674"><path d="M690.5 481 L698.5 481 L694.5 476.5 Z M690.5 556 L698.5 556 L694.5 560.5 Z M145.5 575 L149.5 571 L149.5 579 Z M677.5 571 L681.5 575 L677.5 579 Z" fill="#000"/></svg>
<div class="a" style="left:141px;top:567px;width:545px;height:16px;background:#ECE9D8;"></div>
<div class="a" style="left:141px;top:567px;width:5px;height:16px;background:#ECE9D8;border-right:1px solid #ACA899;box-sizing:border-box;"></div>
<div class="a" style="left:147px;top:567px;width:16px;height:16px;background:#ECE9D8;border-style:solid;border-width:1px 2px 2px 1px;border-color:#fff #716F64 #716F64 #fff;box-sizing:border-box;"></div>
<div class="a" style="left:163px;top:567px;width:505px;height:16px;background:#ECE9D8;border-style:solid;border-width:1px 2px 2px 1px;border-color:#fff #716F64 #716F64 #fff;box-sizing:border-box;"></div>
<div class="a" style="left:668px;top:567px;width:18px;height:16px;background:#ECE9D8;border-style:solid;border-width:1px 2px 2px 1px;border-color:#fff #716F64 #716F64 #fff;box-sizing:border-box;"></div>
<div class="a" style="left:686px;top:567px;width:17px;height:16px;background:#ECE9D8;"></div>
<svg class="a" style="left:0;top:0" width="1180" height="674"><path d="M690.5 481 L698.5 481 L694.5 476.5 Z M690.5 556 L698.5 556 L694.5 560.5 Z M151.5 575 L155.5 571 L155.5 579 Z M675.5 571 L679.5 575 L675.5 579 Z" fill="#000"/></svg>
<div class="a" style="left:156px;top:601px;width:64px;height:23px;background:#ECE9D8;border-style:solid;border-width:1px 2px 2px 1px;border-color:#fff #716F64 #716F64 #fff;box-sizing:border-box;"></div>
<div class="t" style="top:606.69px;font-size:11px;line-height:11px;font-weight:normal;color:#000;letter-spacing:-0.2px;left:188.00px;transform:translateX(-50%);">Clear</div>
<div class="a" style="left:723px;top:78px;width:334px;height:277px;border:1px solid #B8B4A2;box-sizing:border-box;"></div>
<div class="a" style="left:724px;top:79px;width:334px;height:277px;border:1px solid #fff;box-sizing:border-box;"></div>
<div class="a" style="left:724px;top:79px;width:332px;height:275px;border:0;"></div>
<div class="a" style="left:731px;top:77px;width:61px;height:4px;background:#ECE9D8;"></div>
<div class="t" style="top:74.69px;font-size:11px;line-height:11px;font-weight:normal;color:#000;letter-spacing:-0.2px;left:738.50px;">Animation</div>
<div class="a" style="left:739px;top:97px;width:300px;height:200px;background:#fff;"></div>
<div class="t" style="top:106.15px;font-size:14px;line-height:14px;font-weight:bold;color:#000;letter-spacing:-0.1px;left:746.00px;">Frequency 146.493 Hz, Damping 0.747 %</div>
<div class="a" style="left:739px;top:303px;width:110px;height:40px;border:1px solid #B8B4A2;box-sizing:border-box;"></div>
<div class="a" style="left:740px;top:304px;width:110px;height:40px;border:1px solid #fff;box-sizing:border-box;"></div>
<div class="a" style="left:750px;top:300px;width:40px;height:7px;background:#ECE9D8;"></div>
<div class="t" style="top:298.69px;font-size:11px;line-height:11px;font-weight:normal;color:#000;letter-spacing:-0.2px;left:755.00px;">Shape</div>
<div class="a" style="left:755px;top:313px;width:32px;height:24px;background:#ECE9D8;border-style:solid;border-width:1px 2px 2px 1px;border-color:#fff #716F64 #716F64 #fff;box-sizing:border-box;"></div>
<div class="t" style="top:319.69px;font-size:11px;line-height:11px;font-weight:normal;color:#000;letter-spacing:-0.2px;left:771.00px;transform:translateX(-50%);">&lt;</div>
<div class="a" style="left:803px;top:313px;width:32px;height:24px;background:#ECE9D8;border-style:solid;border-width:1px 2px 2px 1px;border-color:#fff #716F64 #716F64 #fff;box-sizing:border-box;"></div>
<div class="t" style="top:319.69px;font-size:11px;line-height:11px;font-weight:normal;color:#000;letter-spacing:-0.2px;left:819.00px;transform:translateX(-50%);">&gt;</div>
<div class="a" style="left:723px;top:367px;width:333px;height:273px;border:1px solid #B8B4A2;box-sizing:border-box;"></div>
<div class="a" style="left:724px;top:368px;width:333px;height:273px;border:1px solid #fff;box-sizing:border-box;"></div>
<div class="a" style="left:724px;top:368px;width:331px;height:271px;border:0;"></div>
<div class="a" style="left:731px;top:366px;width:59px;height:4px;background:#ECE9D8;"></div>
<div class="t" style="top:361.69px;font-size:11px;line-height:11px;font-weight:normal;color:#000;letter-spacing:-0.2px;left:739.00px;">Synthesis</div>
<div class="a" style="left:739px;top:384px;width:306px;height:197px;background:#fff;"></div>
<div class="a" style="left:738px;top:601px;width:97px;height:24px;background:#ECE9D8;border-style:solid;border-width:1px 2px 2px 1px;border-color:#fff #716F64 #716F64 #fff;box-sizing:border-box;"></div>
<div class="t" style="top:607.69px;font-size:11px;line-height:11px;font-weight:normal;color:#000;letter-spacing:-0.2px;left:748.00px;">Synthesis List...</div>
<div class="a" style="left:850.5px;top:601px;width:23.799999999999955px;height:24px;background:#ECE9D8;border-style:solid;border-width:1px 2px 2px 1px;border-color:#fff #716F64 #716F64 #fff;box-sizing:border-box;"></div>
<div class="t" style="top:607.69px;font-size:11px;line-height:11px;font-weight:normal;color:#000;letter-spacing:-0.2px;left:862.40px;transform:translateX(-50%);">|&lt;</div>
<div class="a" style="left:874.3px;top:601px;width:24.300000000000068px;height:24px;background:#ECE9D8;border-style:solid;border-width:1px 2px 2px 1px;border-color:#fff #716F64 #716F64 #fff;box-sizing:border-box;"></div>
<div class="t" style="top:607.69px;font-size:11px;line-height:11px;font-weight:normal;color:#000;letter-spacing:-0.2px;left:886.45px;transform:translateX(-50%);">&lt;</div>
<div class="a" style="left:898.6px;top:601px;width:24.0px;height:24px;background:#ECE9D8;border-style:solid;border-width:1px 2px 2px 1px;border-color:#fff #716F64 #716F64 #fff;box-sizing:border-box;"></div>
<div class="t" style="top:607.69px;font-size:11px;line-height:11px;font-weight:normal;color:#000;letter-spacing:-0.2px;left:910.60px;transform:translateX(-50%);">&gt;</div>
<div class="a" style="left:922.6px;top:601px;width:24.399999999999977px;height:24px;background:#ECE9D8;border-style:solid;border-width:1px 2px 2px 1px;border-color:#fff #716F64 #716F64 #fff;box-sizing:border-box;"></div>
<div class="t" style="top:607.69px;font-size:11px;line-height:11px;font-weight:normal;color:#000;letter-spacing:-0.2px;left:934.80px;transform:translateX(-50%);">&gt;|</div>
<div class="a" style="left:963px;top:601px;width:40px;height:24px;background:#ECE9D8;border-style:solid;border-width:1px 2px 2px 1px;border-color:#fff #716F64 #716F64 #fff;box-sizing:border-box;"></div>
<div class="t" style="top:607.69px;font-size:11px;line-height:11px;font-weight:normal;color:#000;letter-spacing:-0.2px;left:983.00px;transform:translateX(-50%);">All</div>
<div class="a" style="left:1019px;top:606px;width:12px;height:12px;background:#fff;border-style:solid;border-width:1px;border-color:#ACA899 #fff #fff #ACA899;box-sizing:border-box;box-shadow:inset 1px 1px 0 #8d8a7c, inset -1px -1px 0 #E4E0D0;"></div>
<svg class="a" style="left:1019px;top:606px" width="12" height="12" viewBox="0 0 13 13"><path d="M2.5 5 L5 7.5 L10.5 2 L10.5 5 L5 10.5 L2.5 8 Z" fill="#000"/></svg>
<div class="a" style="left:1035px;top:600px;width:21px;height:24px;overflow:hidden;"><div class="t" style="left:0;top:8px;font-size:11px;line-height:11px;">Auto</div></div>
<div class="a" style="left:750px;top:650px;width:70px;height:22px;background:#ECE9D8;border-style:solid;border-width:1px 2px 2px 1px;border-color:#fff #716F64 #716F64 #fff;box-sizing:border-box;"></div>
<div class="t" style="top:654.69px;font-size:11px;line-height:11px;font-weight:normal;color:#000;letter-spacing:-0.2px;left:785.00px;transform:translateX(-50%);">&lt; Prev</div>
<div class="a" style="left:830px;top:650px;width:70px;height:22px;background:#ECE9D8;border-style:solid;border-width:1px 2px 2px 1px;border-color:#fff #716F64 #716F64 #fff;box-sizing:border-box;"></div>
<div class="t" style="top:654.69px;font-size:11px;line-height:11px;font-weight:normal;color:#000;letter-spacing:-0.2px;left:865.00px;transform:translateX(-50%);">Next &gt;</div>
<div class="a" style="left:978px;top:650px;width:70px;height:22px;background:#ECE9D8;border-style:solid;border-width:1px 2px 2px 1px;border-color:#fff #716F64 #716F64 #fff;box-sizing:border-box;"></div>
<div class="t" style="top:654.69px;font-size:11px;line-height:11px;font-weight:normal;color:#000;letter-spacing:-0.2px;left:1013.00px;transform:translateX(-50%);">Cancel</div>
<div class="a" style="left:114px;top:670px;width:952px;height:4px;background:#2b55b0;"></div>
<svg class="a" style="left:0;top:0" width="1180" height="674"><path d="M859.5,128.3 868.8,132.5 846.0,154.3 832.5,180.3 800.3,199.0 764.9,219.3 754.5,216.0 859.5,128.3 M831.4,149.1 847.0,154.3 M779.5,193.8 800.3,199.0 M784.7,164 L973,225.4 M804.4,239.0 835.8,228.8 867.1,216.1 898.5,200.8 937.5,188.1 M804.4,239.0 829.0,247.5 869.7,239.8 912.0,230.5 954.4,218.6 979.8,201.7 M835.8,228.8 869.7,239.8 M867.1,216.1 912.0,230.5 M898.7,200.5 937.1,187.0 973.5,176.6 1010.9,168.3 1034.8,175.6 1006.8,188.1 980.8,202.6 954.8,219.2 M937.1,187.0 980.8,202.6 M973.5,176.6 1006.8,188.1" stroke="#3d4fb8" stroke-width="1.1" fill="none"/><path d="M756.6,191.7 853.2,152.2 866.8,153.2 833.5,179.2 760.8,194.8 756.6,191.7 M791.9,184.4 800.3,188.6 M831.4,161.6 846.0,164.7 M804.4,239.0 806.1,244.9 830.7,252.5 881.5,237.3 M836.6,229.7 869.7,240.7 M974.5,175.6 1010.9,163.1 1032.7,169.4 1029.6,174.5 M974.5,177.7 1004.7,187.0" stroke="#3d4fb8" stroke-width="1.1" stroke-dasharray="2.5,1.8" fill="none"/><path d="M835.8,228.8 867.1,216.1 898.5,200.8 937.5,188.1 M869.7,239.8 912.0,230.5 954.4,218.6 M835.8,228.8 869.7,239.8 M867.1,216.1 912.0,230.5 M898.7,200.5 937.1,187.0 973.5,176.6 M937.1,187.0 980.8,202.6 M973.5,176.6 1006.8,188.1" transform="translate(0.6,-1)" stroke="#3d4fb8" stroke-width="1.0" stroke-dasharray="1.5,1.5" fill="none"/><path d="M927.3,210.2 L953.6,218.6" stroke="#70d040" stroke-width="1.2"/><path d="M1001.6,251.5 V273 M991,273.5 H1012 M997,269 L1006,277 M1006,269 L997,277" stroke="#000" stroke-width="1.2" fill="none"/></svg>
<div class="t" style="top:248.69px;font-size:11px;line-height:11px;font-weight:normal;color:#000;letter-spacing:-0.2px;left:1005.50px;">z</div>
<div class="t" style="top:266.00px;font-size:13px;line-height:13px;font-weight:bold;color:#000;left:1015.00px;">y</div>
<svg class="a" style="left:0;top:0" width="1180" height="674"><path d="M824.98 405.4 V560.0 M846.26 405.4 V560.0 M867.54 405.4 V560.0 M888.82 405.4 V560.0 M931.38 405.4 V560.0 M952.66 405.4 V560.0 M973.94 405.4 V560.0 M995.22 405.4 V560.0 M1037.78 405.4 V560.0" stroke="#9a9a9a" stroke-width="0.9" stroke-dasharray="3,3" fill="none"/><path d="M910.10 405.4 V560.0 M1016.50 405.4 V560.0 M803.7 537.91 H1039.4 M803.7 515.83 H1039.4 M803.7 493.74 H1039.4 M803.7 471.66 H1039.4 M803.7 449.57 H1039.4 M803.7 427.49 H1039.4" stroke="#c0c0c0" stroke-width="1.2" fill="none"/><path d="M803.7,559.1 806.1,537.1 809.8,522.4 814.7,515.1 822.0,511.4 826.9,512.6 829.4,507.7 831.8,485.7 833.8,466.1 834.3,461.2 836.7,475.9 841.6,478.3 847.7,480.8 853.9,475.9 861.2,468.5 865.6,449.0 866.6,439.2 868.5,456.3 873.4,468.5 880.8,478.3 885.7,488.1 888.1,520.0 889.4,497.9 893.0,485.7 900.4,471.0 905.3,461.2 907.2,433.0 908.9,444.1 L912.5,468.6 917.4,489.4 922.3,473.5 925.2,457.6 927.2,449.0 927.9,436.8 929.6,453.9 934.5,462.5 944.3,468.6 954.1,473.5 961.5,480.9 965.1,498.0 965.9,513.9 967.6,493.1 972.5,476.0 981.1,456.4 984.7,429.4 986.0,436.8 990.9,453.9 998.2,460.0 1008.0,463.7 1021.5,466.2" stroke="#3050c8" stroke-width="1.3" stroke-dasharray="3,2.2" fill="none"/><path d="M805.4,559.1 805.4,472.2 806.1,473.4 807.3,480.8 808.6,475.9 811.0,480.8 814.7,490.6 817.6,500.4 819.6,490.6 823.3,458.8 824.5,445.3 825.7,461.2 829.4,471.0 833.0,480.8 833.8,488.1 834.3,462.4 835.5,471.0 839.2,477.1 846.5,483.2 850.2,497.9 852.1,513.8 853.9,497.9 858.8,480.8 864.9,461.2 866.6,435.5 868.5,458.8 873.4,469.8 880.8,475.9 885.7,493.0 886.9,505.3 889.4,473.4 890.1,463.6 891.1,495.5 895.5,480.8 900.4,463.6 904.0,444.1 905.3,434.3 906.5,451.4 907.7,439.2 908.9,451.4 L912.5,458.8 913.7,466.2 914.9,456.4 917.4,460.0 921.0,468.6 924.2,485.8 925.2,466.2 926.7,456.4 927.9,438.0 929.1,451.5 932.1,460.0 939.4,464.9 951.7,469.8 961.5,476.0 966.4,483.3 968.8,504.1 971.3,488.2 976.2,473.5 981.1,456.4 984.7,446.6 986.0,434.3 987.2,446.6 990.9,456.4 998.2,468.6 1004.3,480.9 1008.0,501.7 1010.5,483.3 1015.4,466.2 1020.3,451.5 1021.5,441.7 1023.2,439.2" stroke="#f04a2a" stroke-width="1.2" fill="none"/><rect x="803.7" y="405.4" width="235.70000000000005" height="154.60000000000002" fill="none" stroke="#000" stroke-width="1.6"/><path d="M824.98 405.4 V411.4 M824.98 560.0 V554.0 M846.26 405.4 V411.4 M846.26 560.0 V554.0 M867.54 405.4 V411.4 M867.54 560.0 V554.0 M888.82 405.4 V411.4 M888.82 560.0 V554.0 M910.10 405.4 V411.4 M910.10 560.0 V554.0 M931.38 405.4 V411.4 M931.38 560.0 V554.0 M952.66 405.4 V411.4 M952.66 560.0 V554.0 M973.94 405.4 V411.4 M973.94 560.0 V554.0 M995.22 405.4 V411.4 M995.22 560.0 V554.0 M1016.50 405.4 V411.4 M1016.50 560.0 V554.0 M1037.78 405.4 V411.4 M1037.78 560.0 V554.0 M910.10 560.0 V564.0 M1016.50 560.0 V564.0 M803.7 560.00 H812.7 M1039.4 560.00 H1030.4 M803.7 553.35 H807.2 M1039.4 553.35 H1035.9 M803.7 549.46 H807.2 M1039.4 549.46 H1035.9 M803.7 546.70 H807.2 M1039.4 546.70 H1035.9 M803.7 544.56 H807.2 M1039.4 544.56 H1035.9 M803.7 542.81 H807.2 M1039.4 542.81 H1035.9 M803.7 541.34 H807.2 M1039.4 541.34 H1035.9 M803.7 540.05 H807.2 M1039.4 540.05 H1035.9 M803.7 538.92 H807.2 M1039.4 538.92 H1035.9 M803.7 537.91 H812.7 M1039.4 537.91 H1030.4 M803.7 531.27 H807.2 M1039.4 531.27 H1035.9 M803.7 527.38 H807.2 M1039.4 527.38 H1035.9 M803.7 524.62 H807.2 M1039.4 524.62 H1035.9 M803.7 522.48 H807.2 M1039.4 522.48 H1035.9 M803.7 520.73 H807.2 M1039.4 520.73 H1035.9 M803.7 519.25 H807.2 M1039.4 519.25 H1035.9 M803.7 517.97 H807.2 M1039.4 517.97 H1035.9 M803.7 516.84 H807.2 M1039.4 516.84 H1035.9 M803.7 515.83 H812.7 M1039.4 515.83 H1030.4 M803.7 509.18 H807.2 M1039.4 509.18 H1035.9 M803.7 505.29 H807.2 M1039.4 505.29 H1035.9 M803.7 502.53 H807.2 M1039.4 502.53 H1035.9 M803.7 500.39 H807.2 M1039.4 500.39 H1035.9 M803.7 498.64 H807.2 M1039.4 498.64 H1035.9 M803.7 497.16 H807.2 M1039.4 497.16 H1035.9 M803.7 495.88 H807.2 M1039.4 495.88 H1035.9 M803.7 494.75 H807.2 M1039.4 494.75 H1035.9 M803.7 493.74 H812.7 M1039.4 493.74 H1030.4 M803.7 487.09 H807.2 M1039.4 487.09 H1035.9 M803.7 483.21 H807.2 M1039.4 483.21 H1035.9 M803.7 480.45 H807.2 M1039.4 480.45 H1035.9 M803.7 478.31 H807.2 M1039.4 478.31 H1035.9 M803.7 476.56 H807.2 M1039.4 476.56 H1035.9 M803.7 475.08 H807.2 M1039.4 475.08 H1035.9 M803.7 473.80 H807.2 M1039.4 473.80 H1035.9 M803.7 472.67 H807.2 M1039.4 472.67 H1035.9 M803.7 471.66 H812.7 M1039.4 471.66 H1030.4 M803.7 465.01 H807.2 M1039.4 465.01 H1035.9 M803.7 461.12 H807.2 M1039.4 461.12 H1035.9 M803.7 458.36 H807.2 M1039.4 458.36 H1035.9 M803.7 456.22 H807.2 M1039.4 456.22 H1035.9 M803.7 454.47 H807.2 M1039.4 454.47 H1035.9 M803.7 452.99 H807.2 M1039.4 452.99 H1035.9 M803.7 451.71 H807.2 M1039.4 451.71 H1035.9 M803.7 450.58 H807.2 M1039.4 450.58 H1035.9 M803.7 449.57 H812.7 M1039.4 449.57 H1030.4 M803.7 442.92 H807.2 M1039.4 442.92 H1035.9 M803.7 439.03 H807.2 M1039.4 439.03 H1035.9 M803.7 436.27 H807.2 M1039.4 436.27 H1035.9 M803.7 434.13 H807.2 M1039.4 434.13 H1035.9 M803.7 432.39 H807.2 M1039.4 432.39 H1035.9 M803.7 430.91 H807.2 M1039.4 430.91 H1035.9 M803.7 429.63 H807.2 M1039.4 429.63 H1035.9 M803.7 428.50 H807.2 M1039.4 428.50 H1035.9 M803.7 427.49 H812.7 M1039.4 427.49 H1030.4 M803.7 420.84 H807.2 M1039.4 420.84 H1035.9 M803.7 416.95 H807.2 M1039.4 416.95 H1035.9 M803.7 414.19 H807.2 M1039.4 414.19 H1035.9 M803.7 412.05 H807.2 M1039.4 412.05 H1035.9 M803.7 410.30 H807.2 M1039.4 410.30 H1035.9 M803.7 408.82 H807.2 M1039.4 408.82 H1035.9 M803.7 407.54 H807.2 M1039.4 407.54 H1035.9 M803.7 406.41 H807.2 M1039.4 406.41 H1035.9 M798.7 537.91 H803.7 M798.7 515.83 H803.7 M798.7 493.74 H803.7 M798.7 471.66 H803.7 M798.7 449.57 H803.7 M798.7 427.49 H803.7" stroke="#000" stroke-width="1" fill="none" shape-rendering="crispEdges"/></svg>
<div class="t" style="top:399.54px;font-size:12px;line-height:12px;font-weight:normal;color:#000;right:387.50px;">100k</div>
<div class="t" style="top:421.63px;font-size:12px;line-height:12px;font-weight:normal;color:#000;right:387.50px;">10k</div>
<div class="t" style="top:443.71px;font-size:12px;line-height:12px;font-weight:normal;color:#000;right:387.50px;">1k</div>
<div class="t" style="top:465.80px;font-size:12px;line-height:12px;font-weight:normal;color:#000;right:387.50px;">100</div>
<div class="t" style="top:487.88px;font-size:12px;line-height:12px;font-weight:normal;color:#000;right:387.50px;">10</div>
<div class="t" style="top:509.97px;font-size:12px;line-height:12px;font-weight:normal;color:#000;right:387.50px;">1</div>
<div class="t" style="top:532.06px;font-size:12px;line-height:12px;font-weight:normal;color:#000;right:387.50px;">100m</div>
<div class="t" style="top:554.14px;font-size:12px;line-height:12px;font-weight:normal;color:#000;right:387.50px;">10m</div>
<div class="t" style="top:568.34px;font-size:12px;line-height:12px;font-weight:normal;color:#000;left:804.00px;transform:translateX(-50%);">0</div>
<div class="t" style="top:568.34px;font-size:12px;line-height:12px;font-weight:normal;color:#000;left:910.00px;transform:translateX(-50%);">500</div>
<div class="t" style="top:568.34px;font-size:12px;line-height:12px;font-weight:normal;color:#000;letter-spacing:-0.5px;left:990.00px;">1.1k Hz</div>
<div class="t" style="left:748px;top:482.5px;font-size:12px;line-height:12px;transform:translate(-50%,-50%) rotate(-90deg);">Log g/N</div>
</body></html>
